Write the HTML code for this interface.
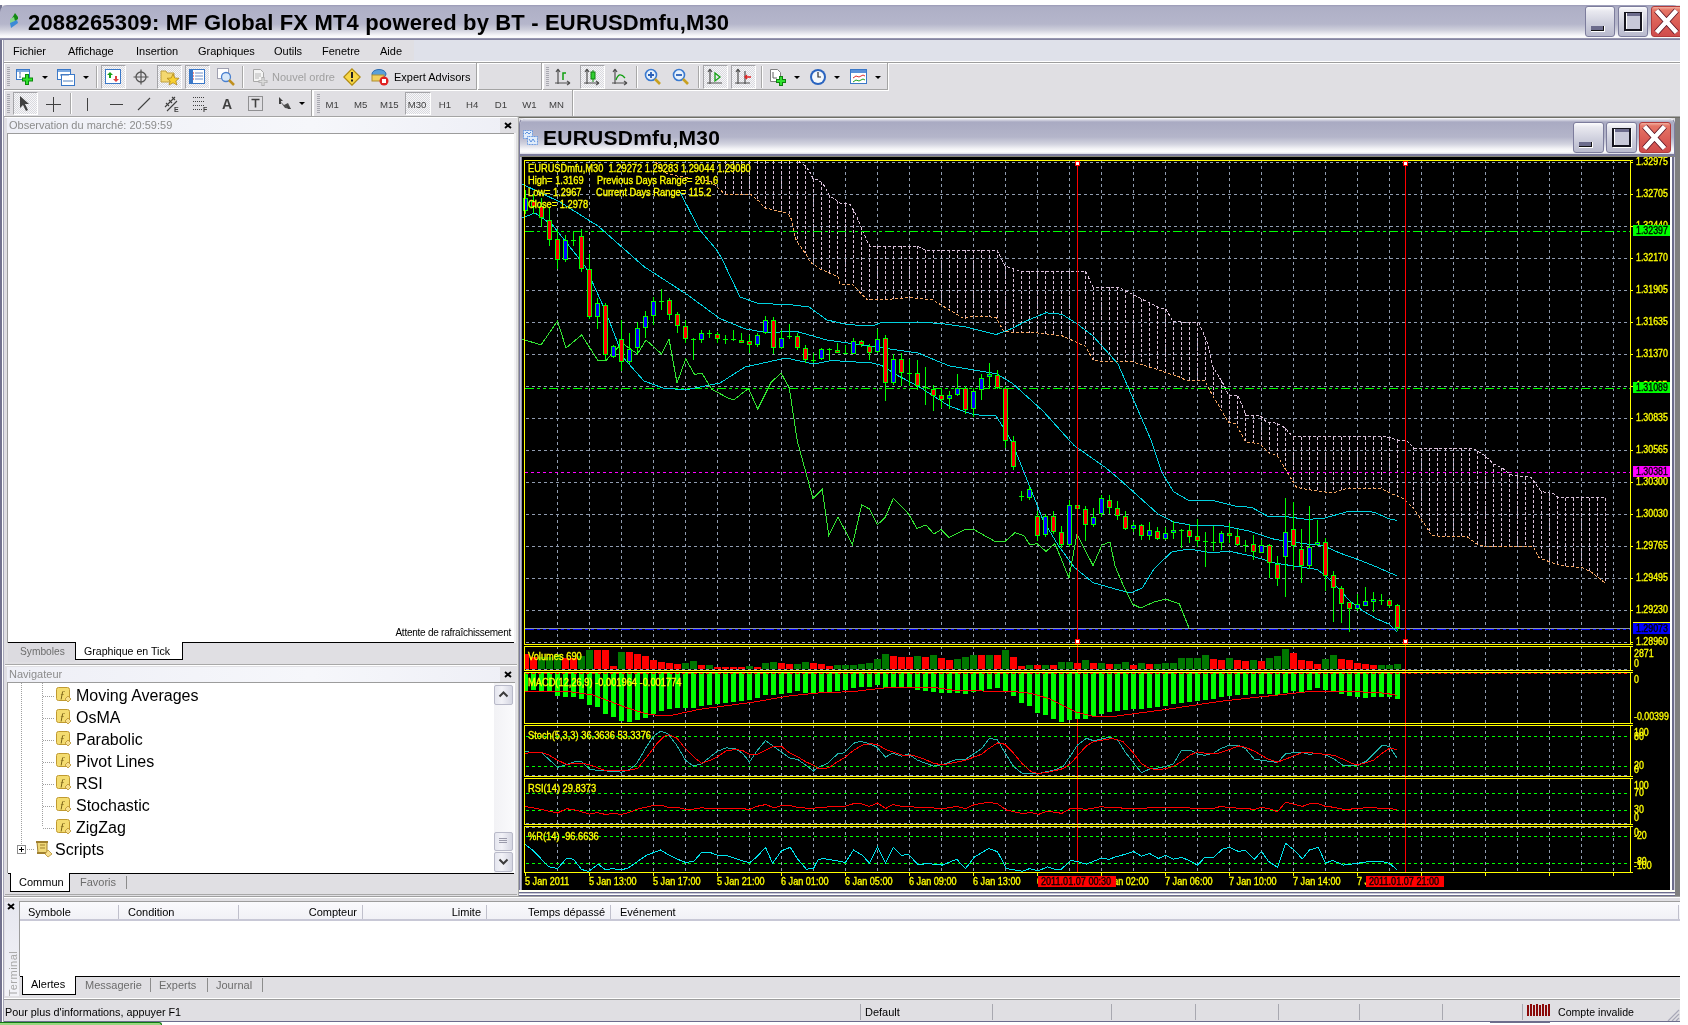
<!DOCTYPE html><html><head><meta charset="utf-8"><style>
*{margin:0;padding:0;box-sizing:border-box}
html,body{width:1688px;height:1025px;overflow:hidden;background:#fff;}
#root{position:absolute;left:0;top:0;width:1688px;height:1025px;will-change:transform;font-family:"Liberation Sans",sans-serif;font-size:11px;color:#000}
.a{position:absolute}
.t{position:absolute;white-space:nowrap;line-height:1}
.g{color:#8c8c8c}
</style></head><body><div id="root"><div class="a" style="left:0px;top:5px;width:1680px;height:1017px;background:#e0dfe3"></div><div class="a" style="left:0px;top:5px;width:2px;height:1017px;background:#73738f"></div><div class="a" style="left:2px;top:39px;width:1px;height:983px;background:#fff"></div><div class="a" style="left:3px;top:39px;width:1px;height:983px;background:#a6a6b8"></div><div class="a" style="left:0px;top:5px;width:1680px;height:34px;border-radius:7px 7px 0 0;background:linear-gradient(#9a9ab6 0px,#aeafc6 2px,#b5b6cb 19px,#cfd0dc 25px,#f3f3f7 30px,#fdfdfd 32px,#eeeef3 34px)"></div><div class="a" style="left:0px;top:38px;width:1680px;height:2px;background:linear-gradient(#a0a0b8,#7a7a98)"></div><svg class="a" style="left:9px;top:12px" width="10" height="17" viewBox="0 0 10 17">
<polygon points="6,1 9,5 9,7 6,9 2,8" fill="#128a12"/><polygon points="1,7 5,5 6,9 1,12" fill="#88d888"/>
<polygon points="1,11 8,8 9,11 2,16" fill="#3b8ad6"/></svg><div class="t" style="left:28px;top:12px;font-size:22px;font-weight:bold;letter-spacing:0.16px">2088265309: MF Global FX MT4 powered by BT - EURUSDmfu,M30</div><div class="a" style="left:1585px;top:6px;width:30px;height:31px;border:1px solid #7c7c9c;border-radius:3px;background:linear-gradient(#fdfdfe 0px,#e9e9f0 4px,#cfd0de 55%,#b9bacd)"></div><div class="a" style="left:1591px;top:26px;width:14px;height:6px;background:#fff"></div><div class="a" style="left:1591px;top:26px;width:13px;height:5px;background:#6c6c8c;border-right:1px solid #111;border-bottom:1px solid #111"></div><div class="a" style="left:1618px;top:6px;width:30px;height:31px;border:1px solid #7c7c9c;border-radius:3px;background:linear-gradient(#fdfdfe 0px,#e9e9f0 4px,#cfd0de 55%,#b9bacd)"></div><div class="a" style="left:1624px;top:12px;width:18px;height:19px;border:2px solid #15151f;border-top:1.5px solid #15151f;box-shadow:1px 1px 0 #fff, inset 1px 0 0 #fff;background:linear-gradient(#6c6c8c 0 3px,#c8c9d9 3px)"></div><div class="a" style="left:1651px;top:6px;width:32px;height:31px;border:1px solid #b23a3a;border-radius:3px;background:linear-gradient(#f2b0a0 0px,#e57566 3px,#dc6058 50%,#cf4c4c)"></div><svg class="a" style="left:1651px;top:6px" width="32" height="31"><path d="M5.5 4.5L25.5 26.5M25.5 4.5L5.5 26.5" stroke="#5a1020" stroke-width="6.2"/><path d="M5.5 4.5L25.5 26.5M25.5 4.5L5.5 26.5" stroke="#fff" stroke-width="4.6"/></svg><div class="a" style="left:1680px;top:0px;width:8px;height:1025px;background:#fff"></div><div class="a" style="left:4px;top:40px;width:1676px;height:21px;background:#dfe1ea"></div><div class="a" style="left:4px;top:40px;width:410px;height:21px;background:#e0dfe3"></div><div class="a" style="left:4px;top:61px;width:1676px;height:1px;background:#fff"></div><div class="a" style="left:4px;top:62px;width:1676px;height:1px;background:#9d9d9d"></div><div class="a" style="left:4px;top:63px;width:1676px;height:1px;background:#fff"></div><div class="t" style="left:13px;top:46px;font-size:11px">Fichier</div><div class="t" style="left:68px;top:46px;font-size:11px">Affichage</div><div class="t" style="left:136px;top:46px;font-size:11px">Insertion</div><div class="t" style="left:198px;top:46px;font-size:11px">Graphiques</div><div class="t" style="left:274px;top:46px;font-size:11px">Outils</div><div class="t" style="left:322px;top:46px;font-size:11px">Fenetre</div><div class="t" style="left:380px;top:46px;font-size:11px">Aide</div><div class="a" style="left:4px;top:64px;width:1676px;height:53px;background:#e0dfe3"></div><div class="a" style="left:4px;top:63px;width:472px;height:1px;background:#fff"></div><div class="a" style="left:4px;top:63px;width:1px;height:26px;background:#fff"></div><div class="a" style="left:476px;top:63px;width:1px;height:27px;background:#a4a4a4"></div><div class="a" style="left:4px;top:89px;width:473px;height:1px;background:#a4a4a4"></div><div class="a" style="left:477px;top:63px;width:1px;height:28px;background:#fff"></div><div class="a" style="left:4px;top:90px;width:474px;height:1px;background:#fff"></div><div class="a" style="left:478px;top:63px;width:63px;height:1px;background:#fff"></div><div class="a" style="left:478px;top:63px;width:1px;height:26px;background:#fff"></div><div class="a" style="left:541px;top:63px;width:1px;height:27px;background:#a4a4a4"></div><div class="a" style="left:478px;top:89px;width:64px;height:1px;background:#a4a4a4"></div><div class="a" style="left:542px;top:63px;width:1px;height:28px;background:#fff"></div><div class="a" style="left:478px;top:90px;width:65px;height:1px;background:#fff"></div><div class="a" style="left:543px;top:63px;width:344px;height:1px;background:#fff"></div><div class="a" style="left:543px;top:63px;width:1px;height:26px;background:#fff"></div><div class="a" style="left:887px;top:63px;width:1px;height:27px;background:#a4a4a4"></div><div class="a" style="left:543px;top:89px;width:345px;height:1px;background:#a4a4a4"></div><div class="a" style="left:888px;top:63px;width:1px;height:28px;background:#fff"></div><div class="a" style="left:543px;top:90px;width:346px;height:1px;background:#fff"></div><div class="a" style="left:4px;top:90px;width:307px;height:1px;background:#fff"></div><div class="a" style="left:4px;top:90px;width:1px;height:26px;background:#fff"></div><div class="a" style="left:311px;top:90px;width:1px;height:27px;background:#a4a4a4"></div><div class="a" style="left:4px;top:116px;width:308px;height:1px;background:#a4a4a4"></div><div class="a" style="left:312px;top:90px;width:1px;height:28px;background:#fff"></div><div class="a" style="left:4px;top:117px;width:309px;height:1px;background:#fff"></div><div class="a" style="left:313px;top:90px;width:259px;height:1px;background:#fff"></div><div class="a" style="left:313px;top:90px;width:1px;height:26px;background:#fff"></div><div class="a" style="left:572px;top:90px;width:1px;height:27px;background:#a4a4a4"></div><div class="a" style="left:313px;top:116px;width:260px;height:1px;background:#a4a4a4"></div><div class="a" style="left:573px;top:90px;width:1px;height:28px;background:#fff"></div><div class="a" style="left:313px;top:117px;width:261px;height:1px;background:#fff"></div><div class="a" style="left:4px;top:116px;width:1676px;height:1px;background:#a4a4a4"></div><div class="a" style="left:7px;top:67px;width:3px;height:1px;background:#a8a8b0"></div><div class="a" style="left:7px;top:69px;width:3px;height:1px;background:#a8a8b0"></div><div class="a" style="left:7px;top:71px;width:3px;height:1px;background:#a8a8b0"></div><div class="a" style="left:7px;top:73px;width:3px;height:1px;background:#a8a8b0"></div><div class="a" style="left:7px;top:75px;width:3px;height:1px;background:#a8a8b0"></div><div class="a" style="left:7px;top:77px;width:3px;height:1px;background:#a8a8b0"></div><div class="a" style="left:7px;top:79px;width:3px;height:1px;background:#a8a8b0"></div><div class="a" style="left:7px;top:81px;width:3px;height:1px;background:#a8a8b0"></div><div class="a" style="left:7px;top:83px;width:3px;height:1px;background:#a8a8b0"></div><div class="a" style="left:7px;top:85px;width:3px;height:1px;background:#a8a8b0"></div><div class="a" style="left:546px;top:67px;width:3px;height:1px;background:#a8a8b0"></div><div class="a" style="left:546px;top:69px;width:3px;height:1px;background:#a8a8b0"></div><div class="a" style="left:546px;top:71px;width:3px;height:1px;background:#a8a8b0"></div><div class="a" style="left:546px;top:73px;width:3px;height:1px;background:#a8a8b0"></div><div class="a" style="left:546px;top:75px;width:3px;height:1px;background:#a8a8b0"></div><div class="a" style="left:546px;top:77px;width:3px;height:1px;background:#a8a8b0"></div><div class="a" style="left:546px;top:79px;width:3px;height:1px;background:#a8a8b0"></div><div class="a" style="left:546px;top:81px;width:3px;height:1px;background:#a8a8b0"></div><div class="a" style="left:546px;top:83px;width:3px;height:1px;background:#a8a8b0"></div><div class="a" style="left:546px;top:85px;width:3px;height:1px;background:#a8a8b0"></div><div class="a" style="left:7px;top:94px;width:3px;height:1px;background:#a8a8b0"></div><div class="a" style="left:7px;top:96px;width:3px;height:1px;background:#a8a8b0"></div><div class="a" style="left:7px;top:98px;width:3px;height:1px;background:#a8a8b0"></div><div class="a" style="left:7px;top:100px;width:3px;height:1px;background:#a8a8b0"></div><div class="a" style="left:7px;top:102px;width:3px;height:1px;background:#a8a8b0"></div><div class="a" style="left:7px;top:104px;width:3px;height:1px;background:#a8a8b0"></div><div class="a" style="left:7px;top:106px;width:3px;height:1px;background:#a8a8b0"></div><div class="a" style="left:7px;top:108px;width:3px;height:1px;background:#a8a8b0"></div><div class="a" style="left:7px;top:110px;width:3px;height:1px;background:#a8a8b0"></div><div class="a" style="left:7px;top:112px;width:3px;height:1px;background:#a8a8b0"></div><div class="a" style="left:317px;top:94px;width:3px;height:1px;background:#a8a8b0"></div><div class="a" style="left:317px;top:96px;width:3px;height:1px;background:#a8a8b0"></div><div class="a" style="left:317px;top:98px;width:3px;height:1px;background:#a8a8b0"></div><div class="a" style="left:317px;top:100px;width:3px;height:1px;background:#a8a8b0"></div><div class="a" style="left:317px;top:102px;width:3px;height:1px;background:#a8a8b0"></div><div class="a" style="left:317px;top:104px;width:3px;height:1px;background:#a8a8b0"></div><div class="a" style="left:317px;top:106px;width:3px;height:1px;background:#a8a8b0"></div><div class="a" style="left:317px;top:108px;width:3px;height:1px;background:#a8a8b0"></div><div class="a" style="left:317px;top:110px;width:3px;height:1px;background:#a8a8b0"></div><div class="a" style="left:317px;top:112px;width:3px;height:1px;background:#a8a8b0"></div><svg class="a" style="left:16px;top:69px" width="18" height="17"><rect x="0.5" y="0.5" width="13" height="10" fill="#fff" stroke="#3a78c8"/><rect x="1" y="1" width="12" height="2" fill="#7aa8e0"/><path d="M4 3v6M3 4h2M3 8h2" stroke="#7090c0"/><path d="M11 5v11M6 10.5h11" stroke="#0a8a0a" stroke-width="4"/><path d="M11 6v9M7 10.5h9" stroke="#30e030" stroke-width="2"/></svg><svg class="a" style="left:42px;top:76px" width="6" height="4"><polygon points="0,0 6,0 3,3" fill="#000"/></svg><svg class="a" style="left:57px;top:69px" width="18" height="17"><rect x="0.5" y="0.5" width="13" height="10" fill="#fff" stroke="#3a78c8"/><rect x="1" y="1" width="12" height="2" fill="#7aa8e0"/><rect x="4.5" y="5.5" width="13" height="11" fill="#fff" stroke="#3a78c8"/><path d="M6 12h10M3 6h9" stroke="#5080c0"/></svg><svg class="a" style="left:83px;top:76px" width="6" height="4"><polygon points="0,0 6,0 3,3" fill="#000"/></svg><div class="a" style="left:96px;top:66px;width:1px;height:22px;background:#a8a8a8"></div><div class="a" style="left:97px;top:66px;width:1px;height:22px;background:#fff"></div><div class="a" style="left:101px;top:65px;width:25px;height:24px;border-top:1.5px solid #a4a4a8;border-left:1.5px solid #a4a4a8;border-right:1px solid #fff;border-bottom:1px solid #fff;background:repeating-conic-gradient(#d9d9de 0 25%,#f7f7f9 0 50%) 0 0/2px 2px"></div><svg class="a" style="left:105px;top:69px" width="17" height="16"><rect x="0.5" y="0.5" width="15" height="14" fill="#fff" stroke="#3a78c8"/><path d="M5 3l3 3h-2v3h-2v-3h-2z" fill="#18a018"/><path d="M11 13l3-3h-2v-3h-2v3h-2z" fill="#e04040"/></svg><svg class="a" style="left:133px;top:69px" width="16" height="16"><circle cx="8" cy="8" r="5" fill="none" stroke="#555" stroke-width="1.3"/><path d="M8 0.5v15M0.5 8h15" stroke="#555" stroke-width="1.2"/></svg><div class="a" style="left:157px;top:65px;width:25px;height:24px;border-top:1.5px solid #a4a4a8;border-left:1.5px solid #a4a4a8;border-right:1px solid #fff;border-bottom:1px solid #fff;background:repeating-conic-gradient(#d9d9de 0 25%,#f7f7f9 0 50%) 0 0/2px 2px"></div><svg class="a" style="left:160px;top:68px" width="19" height="18"><path d="M1 3h5l1 2h7v9h-13z" fill="#f4d870" stroke="#c0a040"/><polygon points="13,6 14.8,10 19,10.3 15.8,13 17,17 13,14.8 9,17 10.2,13 7,10.3 11.2,10" fill="#f8d030" stroke="#b08820" stroke-width="0.8"/></svg><div class="a" style="left:185px;top:65px;width:25px;height:24px;border-top:1.5px solid #a4a4a8;border-left:1.5px solid #a4a4a8;border-right:1px solid #fff;border-bottom:1px solid #fff;background:repeating-conic-gradient(#d9d9de 0 25%,#f7f7f9 0 50%) 0 0/2px 2px"></div><svg class="a" style="left:189px;top:69px" width="17" height="16"><rect x="0.5" y="0.5" width="15" height="14" fill="#fff" stroke="#3a78c8"/><rect x="1" y="1" width="3" height="13" fill="#3a78c8"/><path d="M6 4h8M6 7h8M6 10h8" stroke="#7090c8"/><path d="M4 4h1M4 7h1M4 10h1" stroke="#e02020"/></svg><svg class="a" style="left:217px;top:68px" width="18" height="18"><rect x="0.5" y="0.5" width="11" height="10" fill="#fff" stroke="#a0a0b0"/><circle cx="9" cy="9" r="4.5" fill="#d8e8f8" stroke="#4a80d0" stroke-width="1.3"/><path d="M12 12l5 5" stroke="#c09020" stroke-width="2.5"/></svg><div class="a" style="left:242px;top:66px;width:1px;height:22px;background:#a8a8a8"></div><div class="a" style="left:243px;top:66px;width:1px;height:22px;background:#fff"></div><svg class="a" style="left:252px;top:68px" width="17" height="19"><path d="M1.5 1.5h7l3 3v9h-10z" fill="#f4f4f4" stroke="#a8a8a8"/><path d="M3 6h6M3 8h6M3 10h4" stroke="#b8b8b8"/><path d="M11 9v9M6.5 13.5h9" stroke="#b0b0b0" stroke-width="3.2"/><path d="M11 10v7M7.5 13.5h7" stroke="#dcdcdc" stroke-width="1.4"/></svg><div class="t" style="left:272px;top:72px;font-size:11px;color:#a0a0a0">Nouvel ordre</div><svg class="a" style="left:343px;top:68px" width="18" height="18"><polygon points="9,0.8 17.2,9 9,17.2 0.8,9" fill="#f8d848" stroke="#b08a10" stroke-width="1.2"/><rect x="8" y="4" width="2" height="6" fill="#222"/><rect x="8" y="11.5" width="2" height="2" fill="#222"/></svg><svg class="a" style="left:370px;top:67px" width="20" height="20"><ellipse cx="9" cy="7" rx="7" ry="4.5" fill="#5aa0d8" stroke="#2a6ab0"/><rect x="2" y="8" width="12" height="6" fill="#f0d060" stroke="#b09030"/><circle cx="14" cy="14" r="4.5" fill="#e02020"/><rect x="12" y="12" width="4" height="4" fill="#fff"/></svg><div class="t" style="left:394px;top:72px;font-size:11px">Expert Advisors</div><svg class="a" style="left:555px;top:68px" width="16" height="18"><path d="M3 1v15M0 15h15M3 1l-2 3M3 1l2 3M15 15l-3-2M15 15l-3 2" stroke="#505050" stroke-width="1.2" fill="none"/><path d="M8 12V5h3" stroke="#10a010" stroke-width="1.5" fill="none"/></svg><div class="a" style="left:580px;top:65px;width:25px;height:24px;border-top:1.5px solid #a4a4a8;border-left:1.5px solid #a4a4a8;border-right:1px solid #fff;border-bottom:1px solid #fff;background:repeating-conic-gradient(#d9d9de 0 25%,#f7f7f9 0 50%) 0 0/2px 2px"></div><svg class="a" style="left:584px;top:68px" width="16" height="18"><path d="M3 1v15M0 15h15M3 1l-2 3M3 1l2 3M15 15l-3-2M15 15l-3 2" stroke="#505050" stroke-width="1.2" fill="none"/><path d="M9 2v12" stroke="#109010"/><rect x="7" y="4" width="4" height="7" fill="#30d030" stroke="#108010"/></svg><svg class="a" style="left:612px;top:68px" width="16" height="18"><path d="M3 1v15M0 15h15M3 1l-2 3M3 1l2 3M15 15l-3-2M15 15l-3 2" stroke="#505050" stroke-width="1.2" fill="none"/><path d="M4 12C6 6 9 5 13 10" stroke="#10a010" stroke-width="1.3" fill="none"/></svg><div class="a" style="left:636px;top:66px;width:1px;height:22px;background:#a8a8a8"></div><div class="a" style="left:637px;top:66px;width:1px;height:22px;background:#fff"></div><svg class="a" style="left:644px;top:68px" width="18" height="18"><circle cx="7" cy="7" r="5.5" fill="#e8f2fc" stroke="#3a7ad0" stroke-width="1.6"/><path d="M4 7h6M7 4v6" stroke="#2a60b8" stroke-width="1.8"/><path d="M11 11l5 5" stroke="#c8a020" stroke-width="2.6"/></svg><svg class="a" style="left:672px;top:68px" width="18" height="18"><circle cx="7" cy="7" r="5.5" fill="#e8f2fc" stroke="#3a7ad0" stroke-width="1.6"/><path d="M4 7h6" stroke="#2a60b8" stroke-width="1.8"/><path d="M11 11l5 5" stroke="#c8a020" stroke-width="2.6"/></svg><div class="a" style="left:698px;top:66px;width:1px;height:22px;background:#a8a8a8"></div><div class="a" style="left:699px;top:66px;width:1px;height:22px;background:#fff"></div><div class="a" style="left:703px;top:65px;width:25px;height:24px;border-top:1.5px solid #a4a4a8;border-left:1.5px solid #a4a4a8;border-right:1px solid #fff;border-bottom:1px solid #fff;background:repeating-conic-gradient(#d9d9de 0 25%,#f7f7f9 0 50%) 0 0/2px 2px"></div><svg class="a" style="left:707px;top:68px" width="16" height="18"><path d="M3 1v15M0 15h15M3 1l-2 3M3 1l2 3" stroke="#505050" stroke-width="1.2" fill="none"/><polygon points="8,5 13,9 8,13" fill="none" stroke="#10a010" stroke-width="1.3"/></svg><div class="a" style="left:731px;top:65px;width:25px;height:24px;border-top:1.5px solid #a4a4a8;border-left:1.5px solid #a4a4a8;border-right:1px solid #fff;border-bottom:1px solid #fff;background:repeating-conic-gradient(#d9d9de 0 25%,#f7f7f9 0 50%) 0 0/2px 2px"></div><svg class="a" style="left:735px;top:68px" width="16" height="18"><path d="M3 1v15M0 15h15M3 1l-2 3M3 1l2 3M10 3v13" stroke="#505050" stroke-width="1.2" fill="none"/><path d="M16 9h-5M12 7l-2 2 2 2" stroke="#e02020" stroke-width="1.3" fill="none"/></svg><div class="a" style="left:761px;top:66px;width:1px;height:22px;background:#a8a8a8"></div><div class="a" style="left:762px;top:66px;width:1px;height:22px;background:#fff"></div><svg class="a" style="left:769px;top:67px" width="18" height="20"><path d="M1.5 2.5h7l3 3v9h-10z" fill="#fff" stroke="#808080"/><path d="M4 5v6h4" stroke="#606060" fill="none"/><path d="M12 9v10M7 14h10" stroke="#108010" stroke-width="4"/><path d="M12 10v8M8 14h8" stroke="#30e030" stroke-width="2"/></svg><svg class="a" style="left:794px;top:76px" width="6" height="4"><polygon points="0,0 6,0 3,3" fill="#000"/></svg><svg class="a" style="left:809px;top:68px" width="18" height="18"><circle cx="9" cy="9" r="8" fill="#2a64c0"/><circle cx="9" cy="9" r="6" fill="#f4f8fc"/><path d="M9 4v5h3" stroke="#303030" stroke-width="1.2" fill="none"/></svg><svg class="a" style="left:834px;top:76px" width="6" height="4"><polygon points="0,0 6,0 3,3" fill="#000"/></svg><svg class="a" style="left:850px;top:69px" width="18" height="16"><rect x="0.5" y="0.5" width="16" height="14" fill="#fff" stroke="#3a78c8"/><rect x="1" y="1" width="15" height="3" fill="#5a90d8"/><path d="M3 9l3-2 3 1 4-2 2 1" stroke="#e03030" fill="none"/><path d="M3 13l3-2 3 1 4-2 2 1" stroke="#20a020" fill="none"/></svg><svg class="a" style="left:875px;top:76px" width="6" height="4"><polygon points="0,0 6,0 3,3" fill="#000"/></svg><div class="a" style="left:13px;top:92px;width:25px;height:23px;border-top:1.5px solid #a4a4a8;border-left:1.5px solid #a4a4a8;border-right:1px solid #fff;border-bottom:1px solid #fff;background:repeating-conic-gradient(#d9d9de 0 25%,#f7f7f9 0 50%) 0 0/2px 2px"></div><svg class="a" style="left:19px;top:95px" width="12" height="17"><polygon points="1,1 1,13 4,10 7,16 9,15 6,9 10,9" fill="#404040"/></svg><svg class="a" style="left:46px;top:97px" width="15" height="15"><path d="M7.5 0v15M0 7.5h15" stroke="#404040"/></svg><div class="a" style="left:70px;top:93px;width:1px;height:21px;background:#a8a8a8"></div><div class="a" style="left:71px;top:93px;width:1px;height:21px;background:#fff"></div><div class="a" style="left:87px;top:98px;width:1px;height:13px;background:#404040"></div><div class="a" style="left:110px;top:104px;width:13px;height:1px;background:#404040"></div><svg class="a" style="left:137px;top:97px" width="14" height="14"><path d="M1 13L13 1" stroke="#404040" stroke-width="1.1"/></svg><svg class="a" style="left:163px;top:95px" width="17" height="18"><path d="M2 12L12 2M4 16L14 6M3 8l3 3M6 5l3 3M9 2l3 3" stroke="#404040" stroke-width="1.1"/><text x="11" y="17" font-size="7" font-family="Liberation Sans" font-weight="bold" fill="#404040">E</text></svg><svg class="a" style="left:192px;top:96px" width="17" height="17"><path d="M1 1.5h12M1 5.5h12M1 9.5h12M1 13.5h10" stroke="#404040" stroke-dasharray="1 1"/><text x="11" y="16" font-size="7" font-family="Liberation Sans" font-weight="bold" fill="#404040">F</text></svg><div class="t" style="left:222px;top:97px;font-size:14px;font-weight:bold;color:#404040">A</div><svg class="a" style="left:248px;top:96px" width="15" height="15"><rect x="0.5" y="0.5" width="14" height="14" fill="none" stroke="#404040" stroke-dasharray="1 1"/><path d="M3.5 3.5h8M7.5 3.5v8" stroke="#404040" stroke-width="1.6"/></svg><svg class="a" style="left:277px;top:96px" width="16" height="16"><polygon points="2,1 6,5 4,5 4,8 2,8" fill="#404040"/><polygon points="2,4 7,9 11,7 14,13 8,12" fill="#505050"/><polygon points="9,8 14,13 11,13" fill="#404040"/></svg><svg class="a" style="left:299px;top:102px" width="6" height="4"><polygon points="0,0 6,0 3,3" fill="#000"/></svg><div class="t" style="left:325.5px;top:100px;font-size:9.6px;color:#404040">M1</div><div class="t" style="left:354px;top:100px;font-size:9.6px;color:#404040">M5</div><div class="t" style="left:380px;top:100px;font-size:9.6px;color:#404040">M15</div><div class="a" style="left:405px;top:92px;width:26px;height:23px;border-top:1.5px solid #a4a4a8;border-left:1.5px solid #a4a4a8;border-right:1px solid #fff;border-bottom:1px solid #fff;background:repeating-conic-gradient(#d9d9de 0 25%,#f7f7f9 0 50%) 0 0/2px 2px"></div><div class="t" style="left:407.8px;top:100px;font-size:9.6px;color:#404040">M30</div><div class="t" style="left:438.8px;top:100px;font-size:9.6px;color:#404040">H1</div><div class="t" style="left:466px;top:100px;font-size:9.6px;color:#404040">H4</div><div class="t" style="left:494.8px;top:100px;font-size:9.6px;color:#404040">D1</div><div class="t" style="left:522.2px;top:100px;font-size:9.6px;color:#404040">W1</div><div class="t" style="left:549px;top:100px;font-size:9.6px;color:#404040">MN</div><div class="a" style="left:4px;top:117px;width:1676px;height:781px;background:#e0dfe3"></div><div class="a" style="left:518px;top:117px;width:1162px;height:781px;background:#e0dfe3"></div><div class="a" style="left:1675px;top:117px;width:5px;height:779px;background:#808080"></div><div class="a" style="left:518px;top:117px;width:1162px;height:1px;background:#6e6e66"></div><div class="a" style="left:518px;top:117px;width:1px;height:779px;background:#6e6e66"></div><div class="a" style="left:5px;top:117px;width:512px;height:534px;background:#e0dfe3"></div><div class="a" style="left:5px;top:117px;width:512px;height:1px;background:#fff"></div><div class="a" style="left:7px;top:118px;width:507px;height:15px;background:linear-gradient(90deg,#eeeff6,#f6f7fb 60%,#eeeff6)"></div><div class="a" style="left:500px;top:118px;width:14px;height:15px;background:#e0dfe3"></div><div class="t" style="left:9px;top:120px;font-size:11px;color:#8c8c8c">Observation du march&#233;: 20:59:59</div><svg class="a" style="left:504px;top:122px" width="8" height="7"><path d="M1 1L7 6M7 1L1 6" stroke="#000" stroke-width="1.9"/></svg><div class="a" style="left:7px;top:133px;width:508px;height:510px;background:#fff;border-left:1px solid #9c9c9c;border-top:1px solid #9c9c9c"></div><div class="a" style="left:514px;top:133px;width:2px;height:510px;background:#f4f4f4"></div><div class="t" style="right:1177px;top:628px;font-size:10px;letter-spacing:-0.25px">Attente de rafra&#238;chissement</div><div class="a" style="left:8px;top:642px;width:506px;height:1px;background:#000"></div><div class="a" style="left:8px;top:643px;width:67px;height:19px;background:#dcdbe0"></div><div class="a" style="left:75px;top:642px;width:108px;height:18px;background:#fff;border:1.5px solid #000;border-top:none"></div><div class="t" style="left:20px;top:647px;font-size:10.2px;color:#6c6c6c">Symboles</div><div class="t" style="left:84px;top:646px;font-size:10.6px">Graphique en Tick</div><div class="a" style="left:5px;top:664px;width:512px;height:1px;background:#a8a8a8"></div><div class="a" style="left:5px;top:665px;width:512px;height:1px;background:#fff"></div><div class="a" style="left:7px;top:667px;width:507px;height:15px;background:linear-gradient(90deg,#eeeff6,#f6f7fb 60%,#eeeff6)"></div><div class="a" style="left:500px;top:667px;width:14px;height:15px;background:#e0dfe3"></div><div class="t" style="left:9px;top:669px;font-size:11px;color:#8c8c8c">Navigateur</div><svg class="a" style="left:504px;top:671px" width="8" height="7"><path d="M1 1L7 6M7 1L1 6" stroke="#000" stroke-width="1.9"/></svg><div class="a" style="left:7px;top:682px;width:508px;height:191px;background:#fff;border-left:1px solid #9c9c9c;border-top:1px solid #9c9c9c"></div><div class="a" style="left:21px;top:683px;width:1px;height:170px;background-image:repeating-linear-gradient(#a0a0a0 0 1px,transparent 1px 2px)"></div><div class="a" style="left:42px;top:683px;width:1px;height:144px;background-image:repeating-linear-gradient(#a0a0a0 0 1px,transparent 1px 2px)"></div><div class="a" style="left:43px;top:696px;width:11px;height:1px;background-image:repeating-linear-gradient(90deg,#a0a0a0 0 1px,transparent 1px 2px)"></div><svg class="a" style="left:56px;top:687px" width="16" height="16"><rect x="0.5" y="0.5" width="13" height="13" rx="2" fill="#f4dc70" stroke="#c09a30"/><text x="3.5" y="11" font-size="11" font-style="italic" font-family="Liberation Serif" fill="#705810">&#402;</text><polygon points="12,9 15,12 12,15 9,12" fill="#f8e090" stroke="#b89030" stroke-width="0.8"/></svg><div class="t" style="left:76px;top:688px;font-size:16px">Moving Averages</div><div class="a" style="left:43px;top:718px;width:11px;height:1px;background-image:repeating-linear-gradient(90deg,#a0a0a0 0 1px,transparent 1px 2px)"></div><svg class="a" style="left:56px;top:709px" width="16" height="16"><rect x="0.5" y="0.5" width="13" height="13" rx="2" fill="#f4dc70" stroke="#c09a30"/><text x="3.5" y="11" font-size="11" font-style="italic" font-family="Liberation Serif" fill="#705810">&#402;</text><polygon points="12,9 15,12 12,15 9,12" fill="#f8e090" stroke="#b89030" stroke-width="0.8"/></svg><div class="t" style="left:76px;top:710px;font-size:16px">OsMA</div><div class="a" style="left:43px;top:740px;width:11px;height:1px;background-image:repeating-linear-gradient(90deg,#a0a0a0 0 1px,transparent 1px 2px)"></div><svg class="a" style="left:56px;top:731px" width="16" height="16"><rect x="0.5" y="0.5" width="13" height="13" rx="2" fill="#f4dc70" stroke="#c09a30"/><text x="3.5" y="11" font-size="11" font-style="italic" font-family="Liberation Serif" fill="#705810">&#402;</text><polygon points="12,9 15,12 12,15 9,12" fill="#f8e090" stroke="#b89030" stroke-width="0.8"/></svg><div class="t" style="left:76px;top:732px;font-size:16px">Parabolic</div><div class="a" style="left:43px;top:762px;width:11px;height:1px;background-image:repeating-linear-gradient(90deg,#a0a0a0 0 1px,transparent 1px 2px)"></div><svg class="a" style="left:56px;top:753px" width="16" height="16"><rect x="0.5" y="0.5" width="13" height="13" rx="2" fill="#f4dc70" stroke="#c09a30"/><text x="3.5" y="11" font-size="11" font-style="italic" font-family="Liberation Serif" fill="#705810">&#402;</text><polygon points="12,9 15,12 12,15 9,12" fill="#f8e090" stroke="#b89030" stroke-width="0.8"/></svg><div class="t" style="left:76px;top:754px;font-size:16px">Pivot Lines</div><div class="a" style="left:43px;top:784px;width:11px;height:1px;background-image:repeating-linear-gradient(90deg,#a0a0a0 0 1px,transparent 1px 2px)"></div><svg class="a" style="left:56px;top:775px" width="16" height="16"><rect x="0.5" y="0.5" width="13" height="13" rx="2" fill="#f4dc70" stroke="#c09a30"/><text x="3.5" y="11" font-size="11" font-style="italic" font-family="Liberation Serif" fill="#705810">&#402;</text><polygon points="12,9 15,12 12,15 9,12" fill="#f8e090" stroke="#b89030" stroke-width="0.8"/></svg><div class="t" style="left:76px;top:776px;font-size:16px">RSI</div><div class="a" style="left:43px;top:806px;width:11px;height:1px;background-image:repeating-linear-gradient(90deg,#a0a0a0 0 1px,transparent 1px 2px)"></div><svg class="a" style="left:56px;top:797px" width="16" height="16"><rect x="0.5" y="0.5" width="13" height="13" rx="2" fill="#f4dc70" stroke="#c09a30"/><text x="3.5" y="11" font-size="11" font-style="italic" font-family="Liberation Serif" fill="#705810">&#402;</text><polygon points="12,9 15,12 12,15 9,12" fill="#f8e090" stroke="#b89030" stroke-width="0.8"/></svg><div class="t" style="left:76px;top:798px;font-size:16px">Stochastic</div><div class="a" style="left:43px;top:828px;width:11px;height:1px;background-image:repeating-linear-gradient(90deg,#a0a0a0 0 1px,transparent 1px 2px)"></div><svg class="a" style="left:56px;top:819px" width="16" height="16"><rect x="0.5" y="0.5" width="13" height="13" rx="2" fill="#f4dc70" stroke="#c09a30"/><text x="3.5" y="11" font-size="11" font-style="italic" font-family="Liberation Serif" fill="#705810">&#402;</text><polygon points="12,9 15,12 12,15 9,12" fill="#f8e090" stroke="#b89030" stroke-width="0.8"/></svg><div class="t" style="left:76px;top:820px;font-size:16px">ZigZag</div><div class="a" style="left:17px;top:845px;width:9px;height:9px;background:#fff;border:1px solid #8c8c8c"></div><div class="a" style="left:19px;top:849px;width:5px;height:1px;background:#000"></div><div class="a" style="left:21px;top:847px;width:1px;height:5px;background:#000"></div><div class="a" style="left:27px;top:849px;width:8px;height:1px;background-image:repeating-linear-gradient(90deg,#a0a0a0 0 1px,transparent 1px 2px)"></div><svg class="a" style="left:35px;top:840px" width="18" height="18"><path d="M2 2h10v11h-9z" fill="#f0d878" stroke="#a08030"/><path d="M1 2h12M2 13h11" stroke="#a08030" stroke-width="2"/><path d="M5 5h5M5 8h5" stroke="#a08030"/><polygon points="13,10 17,14 13,17 10,14" fill="#f8e090" stroke="#b89030" stroke-width="0.8"/></svg><div class="t" style="left:55px;top:842px;font-size:16px">Scripts</div><div class="a" style="left:494px;top:683px;width:20px;height:190px;background:linear-gradient(90deg,#f2f2f5,#fafafc)"></div><div class="a" style="left:494px;top:685px;width:19px;height:20px;border:1px solid #b8b9c8;border-radius:2px;background:linear-gradient(90deg,#e4e5ee,#f2f2f7 40%,#d5d6e2)"></div><svg class="a" style="left:498px;top:690px" width="11" height="8"><path d="M1.5 6.5l4-4 4 4" stroke="#3c3c3c" stroke-width="2" fill="none"/></svg><div class="a" style="left:494px;top:832px;width:19px;height:19px;border:1px solid #b8b9c8;border-radius:2px;background:linear-gradient(90deg,#e4e5ee,#f2f2f7 40%,#d5d6e2)"></div><div class="a" style="left:499px;top:838px;width:8px;height:1px;background:#9a9aaa"></div><div class="a" style="left:499px;top:840px;width:8px;height:1px;background:#9a9aaa"></div><div class="a" style="left:499px;top:842px;width:8px;height:1px;background:#9a9aaa"></div><div class="a" style="left:494px;top:852px;width:19px;height:20px;border:1px solid #b8b9c8;border-radius:2px;background:linear-gradient(90deg,#e4e5ee,#f2f2f7 40%,#d5d6e2)"></div><svg class="a" style="left:498px;top:858px" width="11" height="8"><path d="M1.5 1.5l4 4 4-4" stroke="#3c3c3c" stroke-width="2" fill="none"/></svg><div class="a" style="left:8px;top:873px;width:506px;height:1px;background:#000"></div><div class="a" style="left:10px;top:873px;width:60px;height:19px;background:#fff;border:1.5px solid #000;border-top:none"></div><div class="t" style="left:19px;top:877px;font-size:11px">Commun</div><div class="t" style="left:80px;top:877px;font-size:11px;color:#6c6c6c">Favoris</div><div class="a" style="left:126px;top:876px;width:1px;height:13px;background:#8c8c8c"></div><div class="a" style="left:5px;top:894px;width:512px;height:1px;background:#a8a8a8"></div><div class="a" style="left:517px;top:117px;width:2px;height:779px;background:linear-gradient(90deg,#fff,#8a8a8a)"></div><div class="a" style="left:519px;top:118px;width:1156px;height:778px;background:#c9cad8;border:1px solid #7d7d9c;border-top-color:#f4f4f8;border-radius:6px 6px 0 0"></div><div class="a" style="left:520px;top:119px;width:1154px;height:35px;border-radius:6px 6px 0 0;background:linear-gradient(#e8e8f0 0px,#a9aac2 3px,#b4b5ca 18px,#d2d3df 25px,#f5f5f8 30px,#fdfdfd 33px,#d8d8e2 35px)"></div><div class="a" style="left:520px;top:154px;width:1154px;height:2px;background:#7c7c9c"></div><div class="a" style="left:520px;top:156px;width:1154px;height:1px;background:#8a8878"></div><div class="a" style="left:519px;top:157px;width:1px;height:735px;background:#7d7d9c"></div><div class="a" style="left:520px;top:157px;width:1px;height:735px;background:#c4c4d4"></div><div class="a" style="left:521px;top:157px;width:1px;height:735px;background:#9090a8"></div><div class="a" style="left:1670px;top:157px;width:5px;height:735px;background:linear-gradient(90deg,#fff 0 2px,#6c6c8c 2px 3.5px,#d0d0dc 3.5px 5px)"></div><div class="a" style="left:519px;top:890px;width:1156px;height:6px;background:linear-gradient(#fffff4 0 2px,#6c6c8c 2px 3px,#c8c8d8 3px 4px,#fff 4px 5px,#6c6c8c 5px 6px)"></div><svg class="a" style="left:523px;top:130px" width="15" height="15"><rect x="0.5" y="0.5" width="9" height="8" fill="#e0ecfa" stroke="#5a90e0" stroke-dasharray="1 0.6"/><path d="M2 4l2-2 2 2 2-2" stroke="#5a90e0" fill="none"/><rect x="4.5" y="6.5" width="10" height="8" fill="#e0ecfa" stroke="#5a90e0" stroke-dasharray="1 0.6"/><path d="M6 9l2 3 2-3 2 3" stroke="#5a90e0" fill="none"/></svg><div class="t" style="left:543px;top:127px;font-size:21px;font-weight:bold;letter-spacing:0.25px">EURUSDmfu,M30</div><div class="a" style="left:1573px;top:122px;width:31px;height:31px;border:1px solid #7c7c9c;border-radius:3px;background:linear-gradient(#fdfdfe 0px,#e9e9f0 4px,#cfd0de 55%,#b9bacd)"></div><div class="a" style="left:1579px;top:142px;width:14px;height:6px;background:#fff"></div><div class="a" style="left:1579px;top:142px;width:13px;height:5px;background:#6c6c8c;border-right:1px solid #111;border-bottom:1px solid #111"></div><div class="a" style="left:1606px;top:122px;width:31px;height:31px;border:1px solid #7c7c9c;border-radius:3px;background:linear-gradient(#fdfdfe 0px,#e9e9f0 4px,#cfd0de 55%,#b9bacd)"></div><div class="a" style="left:1612px;top:128px;width:19px;height:19px;border:2px solid #15151f;border-top:1.5px solid #15151f;box-shadow:1px 1px 0 #fff, inset 1px 0 0 #fff;background:linear-gradient(#6c6c8c 0 3px,#c8c9d9 3px)"></div><div class="a" style="left:1639px;top:122px;width:32px;height:31px;border:1px solid #b23a3a;border-radius:3px;background:linear-gradient(#f2b0a0 0px,#e57566 3px,#dc6058 50%,#cf4c4c)"></div><svg class="a" style="left:1639px;top:122px" width="32" height="31"><path d="M5.5 4.5L25.5 26.5M25.5 4.5L5.5 26.5" stroke="#5a1020" stroke-width="6.2"/><path d="M5.5 4.5L25.5 26.5M25.5 4.5L5.5 26.5" stroke="#fff" stroke-width="4.6"/></svg><svg class="a" style="left:522px;top:157px;will-change:transform" width="1148" height="733" viewBox="522 157 1148 733" font-family="Liberation Sans, sans-serif"><rect x="522" y="157" width="1148" height="733" fill="#000"/><g shape-rendering="crispEdges"><line x1="557.5" y1="160" x2="557.5" y2="644" stroke="#909cb0" stroke-width="1" stroke-dasharray="3 3"/><line x1="589.5" y1="160" x2="589.5" y2="644" stroke="#909cb0" stroke-width="1" stroke-dasharray="3 3"/><line x1="621.5" y1="160" x2="621.5" y2="644" stroke="#909cb0" stroke-width="1" stroke-dasharray="3 3"/><line x1="653.5" y1="160" x2="653.5" y2="644" stroke="#909cb0" stroke-width="1" stroke-dasharray="3 3"/><line x1="685.5" y1="160" x2="685.5" y2="644" stroke="#909cb0" stroke-width="1" stroke-dasharray="3 3"/><line x1="717.5" y1="160" x2="717.5" y2="644" stroke="#909cb0" stroke-width="1" stroke-dasharray="3 3"/><line x1="749.5" y1="160" x2="749.5" y2="644" stroke="#909cb0" stroke-width="1" stroke-dasharray="3 3"/><line x1="781.5" y1="160" x2="781.5" y2="644" stroke="#909cb0" stroke-width="1" stroke-dasharray="3 3"/><line x1="813.5" y1="160" x2="813.5" y2="644" stroke="#909cb0" stroke-width="1" stroke-dasharray="3 3"/><line x1="845.5" y1="160" x2="845.5" y2="644" stroke="#909cb0" stroke-width="1" stroke-dasharray="3 3"/><line x1="877.5" y1="160" x2="877.5" y2="644" stroke="#909cb0" stroke-width="1" stroke-dasharray="3 3"/><line x1="909.5" y1="160" x2="909.5" y2="644" stroke="#909cb0" stroke-width="1" stroke-dasharray="3 3"/><line x1="941.5" y1="160" x2="941.5" y2="644" stroke="#909cb0" stroke-width="1" stroke-dasharray="3 3"/><line x1="973.5" y1="160" x2="973.5" y2="644" stroke="#909cb0" stroke-width="1" stroke-dasharray="3 3"/><line x1="1005.5" y1="160" x2="1005.5" y2="644" stroke="#909cb0" stroke-width="1" stroke-dasharray="3 3"/><line x1="1037.5" y1="160" x2="1037.5" y2="644" stroke="#909cb0" stroke-width="1" stroke-dasharray="3 3"/><line x1="1069.5" y1="160" x2="1069.5" y2="644" stroke="#909cb0" stroke-width="1" stroke-dasharray="3 3"/><line x1="1101.5" y1="160" x2="1101.5" y2="644" stroke="#909cb0" stroke-width="1" stroke-dasharray="3 3"/><line x1="1133.5" y1="160" x2="1133.5" y2="644" stroke="#909cb0" stroke-width="1" stroke-dasharray="3 3"/><line x1="1165.5" y1="160" x2="1165.5" y2="644" stroke="#909cb0" stroke-width="1" stroke-dasharray="3 3"/><line x1="1197.5" y1="160" x2="1197.5" y2="644" stroke="#909cb0" stroke-width="1" stroke-dasharray="3 3"/><line x1="1229.5" y1="160" x2="1229.5" y2="644" stroke="#909cb0" stroke-width="1" stroke-dasharray="3 3"/><line x1="1261.5" y1="160" x2="1261.5" y2="644" stroke="#909cb0" stroke-width="1" stroke-dasharray="3 3"/><line x1="1293.5" y1="160" x2="1293.5" y2="644" stroke="#909cb0" stroke-width="1" stroke-dasharray="3 3"/><line x1="1325.5" y1="160" x2="1325.5" y2="644" stroke="#909cb0" stroke-width="1" stroke-dasharray="3 3"/><line x1="1357.5" y1="160" x2="1357.5" y2="644" stroke="#909cb0" stroke-width="1" stroke-dasharray="3 3"/><line x1="1389.5" y1="160" x2="1389.5" y2="644" stroke="#909cb0" stroke-width="1" stroke-dasharray="3 3"/><line x1="1421.5" y1="160" x2="1421.5" y2="644" stroke="#909cb0" stroke-width="1" stroke-dasharray="3 3"/><line x1="1453.5" y1="160" x2="1453.5" y2="644" stroke="#909cb0" stroke-width="1" stroke-dasharray="3 3"/><line x1="1485.5" y1="160" x2="1485.5" y2="644" stroke="#909cb0" stroke-width="1" stroke-dasharray="3 3"/><line x1="1517.5" y1="160" x2="1517.5" y2="644" stroke="#909cb0" stroke-width="1" stroke-dasharray="3 3"/><line x1="1549.5" y1="160" x2="1549.5" y2="644" stroke="#909cb0" stroke-width="1" stroke-dasharray="3 3"/><line x1="1581.5" y1="160" x2="1581.5" y2="644" stroke="#909cb0" stroke-width="1" stroke-dasharray="3 3"/><line x1="1613.5" y1="160" x2="1613.5" y2="644" stroke="#909cb0" stroke-width="1" stroke-dasharray="3 3"/><line x1="557.5" y1="646" x2="557.5" y2="670" stroke="#909cb0" stroke-width="1" stroke-dasharray="3 3"/><line x1="589.5" y1="646" x2="589.5" y2="670" stroke="#909cb0" stroke-width="1" stroke-dasharray="3 3"/><line x1="621.5" y1="646" x2="621.5" y2="670" stroke="#909cb0" stroke-width="1" stroke-dasharray="3 3"/><line x1="653.5" y1="646" x2="653.5" y2="670" stroke="#909cb0" stroke-width="1" stroke-dasharray="3 3"/><line x1="685.5" y1="646" x2="685.5" y2="670" stroke="#909cb0" stroke-width="1" stroke-dasharray="3 3"/><line x1="717.5" y1="646" x2="717.5" y2="670" stroke="#909cb0" stroke-width="1" stroke-dasharray="3 3"/><line x1="749.5" y1="646" x2="749.5" y2="670" stroke="#909cb0" stroke-width="1" stroke-dasharray="3 3"/><line x1="781.5" y1="646" x2="781.5" y2="670" stroke="#909cb0" stroke-width="1" stroke-dasharray="3 3"/><line x1="813.5" y1="646" x2="813.5" y2="670" stroke="#909cb0" stroke-width="1" stroke-dasharray="3 3"/><line x1="845.5" y1="646" x2="845.5" y2="670" stroke="#909cb0" stroke-width="1" stroke-dasharray="3 3"/><line x1="877.5" y1="646" x2="877.5" y2="670" stroke="#909cb0" stroke-width="1" stroke-dasharray="3 3"/><line x1="909.5" y1="646" x2="909.5" y2="670" stroke="#909cb0" stroke-width="1" stroke-dasharray="3 3"/><line x1="941.5" y1="646" x2="941.5" y2="670" stroke="#909cb0" stroke-width="1" stroke-dasharray="3 3"/><line x1="973.5" y1="646" x2="973.5" y2="670" stroke="#909cb0" stroke-width="1" stroke-dasharray="3 3"/><line x1="1005.5" y1="646" x2="1005.5" y2="670" stroke="#909cb0" stroke-width="1" stroke-dasharray="3 3"/><line x1="1037.5" y1="646" x2="1037.5" y2="670" stroke="#909cb0" stroke-width="1" stroke-dasharray="3 3"/><line x1="1069.5" y1="646" x2="1069.5" y2="670" stroke="#909cb0" stroke-width="1" stroke-dasharray="3 3"/><line x1="1101.5" y1="646" x2="1101.5" y2="670" stroke="#909cb0" stroke-width="1" stroke-dasharray="3 3"/><line x1="1133.5" y1="646" x2="1133.5" y2="670" stroke="#909cb0" stroke-width="1" stroke-dasharray="3 3"/><line x1="1165.5" y1="646" x2="1165.5" y2="670" stroke="#909cb0" stroke-width="1" stroke-dasharray="3 3"/><line x1="1197.5" y1="646" x2="1197.5" y2="670" stroke="#909cb0" stroke-width="1" stroke-dasharray="3 3"/><line x1="1229.5" y1="646" x2="1229.5" y2="670" stroke="#909cb0" stroke-width="1" stroke-dasharray="3 3"/><line x1="1261.5" y1="646" x2="1261.5" y2="670" stroke="#909cb0" stroke-width="1" stroke-dasharray="3 3"/><line x1="1293.5" y1="646" x2="1293.5" y2="670" stroke="#909cb0" stroke-width="1" stroke-dasharray="3 3"/><line x1="1325.5" y1="646" x2="1325.5" y2="670" stroke="#909cb0" stroke-width="1" stroke-dasharray="3 3"/><line x1="1357.5" y1="646" x2="1357.5" y2="670" stroke="#909cb0" stroke-width="1" stroke-dasharray="3 3"/><line x1="1389.5" y1="646" x2="1389.5" y2="670" stroke="#909cb0" stroke-width="1" stroke-dasharray="3 3"/><line x1="1421.5" y1="646" x2="1421.5" y2="670" stroke="#909cb0" stroke-width="1" stroke-dasharray="3 3"/><line x1="1453.5" y1="646" x2="1453.5" y2="670" stroke="#909cb0" stroke-width="1" stroke-dasharray="3 3"/><line x1="1485.5" y1="646" x2="1485.5" y2="670" stroke="#909cb0" stroke-width="1" stroke-dasharray="3 3"/><line x1="1517.5" y1="646" x2="1517.5" y2="670" stroke="#909cb0" stroke-width="1" stroke-dasharray="3 3"/><line x1="1549.5" y1="646" x2="1549.5" y2="670" stroke="#909cb0" stroke-width="1" stroke-dasharray="3 3"/><line x1="1581.5" y1="646" x2="1581.5" y2="670" stroke="#909cb0" stroke-width="1" stroke-dasharray="3 3"/><line x1="1613.5" y1="646" x2="1613.5" y2="670" stroke="#909cb0" stroke-width="1" stroke-dasharray="3 3"/><line x1="557.5" y1="672" x2="557.5" y2="723" stroke="#909cb0" stroke-width="1" stroke-dasharray="3 3"/><line x1="589.5" y1="672" x2="589.5" y2="723" stroke="#909cb0" stroke-width="1" stroke-dasharray="3 3"/><line x1="621.5" y1="672" x2="621.5" y2="723" stroke="#909cb0" stroke-width="1" stroke-dasharray="3 3"/><line x1="653.5" y1="672" x2="653.5" y2="723" stroke="#909cb0" stroke-width="1" stroke-dasharray="3 3"/><line x1="685.5" y1="672" x2="685.5" y2="723" stroke="#909cb0" stroke-width="1" stroke-dasharray="3 3"/><line x1="717.5" y1="672" x2="717.5" y2="723" stroke="#909cb0" stroke-width="1" stroke-dasharray="3 3"/><line x1="749.5" y1="672" x2="749.5" y2="723" stroke="#909cb0" stroke-width="1" stroke-dasharray="3 3"/><line x1="781.5" y1="672" x2="781.5" y2="723" stroke="#909cb0" stroke-width="1" stroke-dasharray="3 3"/><line x1="813.5" y1="672" x2="813.5" y2="723" stroke="#909cb0" stroke-width="1" stroke-dasharray="3 3"/><line x1="845.5" y1="672" x2="845.5" y2="723" stroke="#909cb0" stroke-width="1" stroke-dasharray="3 3"/><line x1="877.5" y1="672" x2="877.5" y2="723" stroke="#909cb0" stroke-width="1" stroke-dasharray="3 3"/><line x1="909.5" y1="672" x2="909.5" y2="723" stroke="#909cb0" stroke-width="1" stroke-dasharray="3 3"/><line x1="941.5" y1="672" x2="941.5" y2="723" stroke="#909cb0" stroke-width="1" stroke-dasharray="3 3"/><line x1="973.5" y1="672" x2="973.5" y2="723" stroke="#909cb0" stroke-width="1" stroke-dasharray="3 3"/><line x1="1005.5" y1="672" x2="1005.5" y2="723" stroke="#909cb0" stroke-width="1" stroke-dasharray="3 3"/><line x1="1037.5" y1="672" x2="1037.5" y2="723" stroke="#909cb0" stroke-width="1" stroke-dasharray="3 3"/><line x1="1069.5" y1="672" x2="1069.5" y2="723" stroke="#909cb0" stroke-width="1" stroke-dasharray="3 3"/><line x1="1101.5" y1="672" x2="1101.5" y2="723" stroke="#909cb0" stroke-width="1" stroke-dasharray="3 3"/><line x1="1133.5" y1="672" x2="1133.5" y2="723" stroke="#909cb0" stroke-width="1" stroke-dasharray="3 3"/><line x1="1165.5" y1="672" x2="1165.5" y2="723" stroke="#909cb0" stroke-width="1" stroke-dasharray="3 3"/><line x1="1197.5" y1="672" x2="1197.5" y2="723" stroke="#909cb0" stroke-width="1" stroke-dasharray="3 3"/><line x1="1229.5" y1="672" x2="1229.5" y2="723" stroke="#909cb0" stroke-width="1" stroke-dasharray="3 3"/><line x1="1261.5" y1="672" x2="1261.5" y2="723" stroke="#909cb0" stroke-width="1" stroke-dasharray="3 3"/><line x1="1293.5" y1="672" x2="1293.5" y2="723" stroke="#909cb0" stroke-width="1" stroke-dasharray="3 3"/><line x1="1325.5" y1="672" x2="1325.5" y2="723" stroke="#909cb0" stroke-width="1" stroke-dasharray="3 3"/><line x1="1357.5" y1="672" x2="1357.5" y2="723" stroke="#909cb0" stroke-width="1" stroke-dasharray="3 3"/><line x1="1389.5" y1="672" x2="1389.5" y2="723" stroke="#909cb0" stroke-width="1" stroke-dasharray="3 3"/><line x1="1421.5" y1="672" x2="1421.5" y2="723" stroke="#909cb0" stroke-width="1" stroke-dasharray="3 3"/><line x1="1453.5" y1="672" x2="1453.5" y2="723" stroke="#909cb0" stroke-width="1" stroke-dasharray="3 3"/><line x1="1485.5" y1="672" x2="1485.5" y2="723" stroke="#909cb0" stroke-width="1" stroke-dasharray="3 3"/><line x1="1517.5" y1="672" x2="1517.5" y2="723" stroke="#909cb0" stroke-width="1" stroke-dasharray="3 3"/><line x1="1549.5" y1="672" x2="1549.5" y2="723" stroke="#909cb0" stroke-width="1" stroke-dasharray="3 3"/><line x1="1581.5" y1="672" x2="1581.5" y2="723" stroke="#909cb0" stroke-width="1" stroke-dasharray="3 3"/><line x1="1613.5" y1="672" x2="1613.5" y2="723" stroke="#909cb0" stroke-width="1" stroke-dasharray="3 3"/><line x1="557.5" y1="725" x2="557.5" y2="776" stroke="#909cb0" stroke-width="1" stroke-dasharray="3 3"/><line x1="589.5" y1="725" x2="589.5" y2="776" stroke="#909cb0" stroke-width="1" stroke-dasharray="3 3"/><line x1="621.5" y1="725" x2="621.5" y2="776" stroke="#909cb0" stroke-width="1" stroke-dasharray="3 3"/><line x1="653.5" y1="725" x2="653.5" y2="776" stroke="#909cb0" stroke-width="1" stroke-dasharray="3 3"/><line x1="685.5" y1="725" x2="685.5" y2="776" stroke="#909cb0" stroke-width="1" stroke-dasharray="3 3"/><line x1="717.5" y1="725" x2="717.5" y2="776" stroke="#909cb0" stroke-width="1" stroke-dasharray="3 3"/><line x1="749.5" y1="725" x2="749.5" y2="776" stroke="#909cb0" stroke-width="1" stroke-dasharray="3 3"/><line x1="781.5" y1="725" x2="781.5" y2="776" stroke="#909cb0" stroke-width="1" stroke-dasharray="3 3"/><line x1="813.5" y1="725" x2="813.5" y2="776" stroke="#909cb0" stroke-width="1" stroke-dasharray="3 3"/><line x1="845.5" y1="725" x2="845.5" y2="776" stroke="#909cb0" stroke-width="1" stroke-dasharray="3 3"/><line x1="877.5" y1="725" x2="877.5" y2="776" stroke="#909cb0" stroke-width="1" stroke-dasharray="3 3"/><line x1="909.5" y1="725" x2="909.5" y2="776" stroke="#909cb0" stroke-width="1" stroke-dasharray="3 3"/><line x1="941.5" y1="725" x2="941.5" y2="776" stroke="#909cb0" stroke-width="1" stroke-dasharray="3 3"/><line x1="973.5" y1="725" x2="973.5" y2="776" stroke="#909cb0" stroke-width="1" stroke-dasharray="3 3"/><line x1="1005.5" y1="725" x2="1005.5" y2="776" stroke="#909cb0" stroke-width="1" stroke-dasharray="3 3"/><line x1="1037.5" y1="725" x2="1037.5" y2="776" stroke="#909cb0" stroke-width="1" stroke-dasharray="3 3"/><line x1="1069.5" y1="725" x2="1069.5" y2="776" stroke="#909cb0" stroke-width="1" stroke-dasharray="3 3"/><line x1="1101.5" y1="725" x2="1101.5" y2="776" stroke="#909cb0" stroke-width="1" stroke-dasharray="3 3"/><line x1="1133.5" y1="725" x2="1133.5" y2="776" stroke="#909cb0" stroke-width="1" stroke-dasharray="3 3"/><line x1="1165.5" y1="725" x2="1165.5" y2="776" stroke="#909cb0" stroke-width="1" stroke-dasharray="3 3"/><line x1="1197.5" y1="725" x2="1197.5" y2="776" stroke="#909cb0" stroke-width="1" stroke-dasharray="3 3"/><line x1="1229.5" y1="725" x2="1229.5" y2="776" stroke="#909cb0" stroke-width="1" stroke-dasharray="3 3"/><line x1="1261.5" y1="725" x2="1261.5" y2="776" stroke="#909cb0" stroke-width="1" stroke-dasharray="3 3"/><line x1="1293.5" y1="725" x2="1293.5" y2="776" stroke="#909cb0" stroke-width="1" stroke-dasharray="3 3"/><line x1="1325.5" y1="725" x2="1325.5" y2="776" stroke="#909cb0" stroke-width="1" stroke-dasharray="3 3"/><line x1="1357.5" y1="725" x2="1357.5" y2="776" stroke="#909cb0" stroke-width="1" stroke-dasharray="3 3"/><line x1="1389.5" y1="725" x2="1389.5" y2="776" stroke="#909cb0" stroke-width="1" stroke-dasharray="3 3"/><line x1="1421.5" y1="725" x2="1421.5" y2="776" stroke="#909cb0" stroke-width="1" stroke-dasharray="3 3"/><line x1="1453.5" y1="725" x2="1453.5" y2="776" stroke="#909cb0" stroke-width="1" stroke-dasharray="3 3"/><line x1="1485.5" y1="725" x2="1485.5" y2="776" stroke="#909cb0" stroke-width="1" stroke-dasharray="3 3"/><line x1="1517.5" y1="725" x2="1517.5" y2="776" stroke="#909cb0" stroke-width="1" stroke-dasharray="3 3"/><line x1="1549.5" y1="725" x2="1549.5" y2="776" stroke="#909cb0" stroke-width="1" stroke-dasharray="3 3"/><line x1="1581.5" y1="725" x2="1581.5" y2="776" stroke="#909cb0" stroke-width="1" stroke-dasharray="3 3"/><line x1="1613.5" y1="725" x2="1613.5" y2="776" stroke="#909cb0" stroke-width="1" stroke-dasharray="3 3"/><line x1="557.5" y1="778" x2="557.5" y2="824" stroke="#909cb0" stroke-width="1" stroke-dasharray="3 3"/><line x1="589.5" y1="778" x2="589.5" y2="824" stroke="#909cb0" stroke-width="1" stroke-dasharray="3 3"/><line x1="621.5" y1="778" x2="621.5" y2="824" stroke="#909cb0" stroke-width="1" stroke-dasharray="3 3"/><line x1="653.5" y1="778" x2="653.5" y2="824" stroke="#909cb0" stroke-width="1" stroke-dasharray="3 3"/><line x1="685.5" y1="778" x2="685.5" y2="824" stroke="#909cb0" stroke-width="1" stroke-dasharray="3 3"/><line x1="717.5" y1="778" x2="717.5" y2="824" stroke="#909cb0" stroke-width="1" stroke-dasharray="3 3"/><line x1="749.5" y1="778" x2="749.5" y2="824" stroke="#909cb0" stroke-width="1" stroke-dasharray="3 3"/><line x1="781.5" y1="778" x2="781.5" y2="824" stroke="#909cb0" stroke-width="1" stroke-dasharray="3 3"/><line x1="813.5" y1="778" x2="813.5" y2="824" stroke="#909cb0" stroke-width="1" stroke-dasharray="3 3"/><line x1="845.5" y1="778" x2="845.5" y2="824" stroke="#909cb0" stroke-width="1" stroke-dasharray="3 3"/><line x1="877.5" y1="778" x2="877.5" y2="824" stroke="#909cb0" stroke-width="1" stroke-dasharray="3 3"/><line x1="909.5" y1="778" x2="909.5" y2="824" stroke="#909cb0" stroke-width="1" stroke-dasharray="3 3"/><line x1="941.5" y1="778" x2="941.5" y2="824" stroke="#909cb0" stroke-width="1" stroke-dasharray="3 3"/><line x1="973.5" y1="778" x2="973.5" y2="824" stroke="#909cb0" stroke-width="1" stroke-dasharray="3 3"/><line x1="1005.5" y1="778" x2="1005.5" y2="824" stroke="#909cb0" stroke-width="1" stroke-dasharray="3 3"/><line x1="1037.5" y1="778" x2="1037.5" y2="824" stroke="#909cb0" stroke-width="1" stroke-dasharray="3 3"/><line x1="1069.5" y1="778" x2="1069.5" y2="824" stroke="#909cb0" stroke-width="1" stroke-dasharray="3 3"/><line x1="1101.5" y1="778" x2="1101.5" y2="824" stroke="#909cb0" stroke-width="1" stroke-dasharray="3 3"/><line x1="1133.5" y1="778" x2="1133.5" y2="824" stroke="#909cb0" stroke-width="1" stroke-dasharray="3 3"/><line x1="1165.5" y1="778" x2="1165.5" y2="824" stroke="#909cb0" stroke-width="1" stroke-dasharray="3 3"/><line x1="1197.5" y1="778" x2="1197.5" y2="824" stroke="#909cb0" stroke-width="1" stroke-dasharray="3 3"/><line x1="1229.5" y1="778" x2="1229.5" y2="824" stroke="#909cb0" stroke-width="1" stroke-dasharray="3 3"/><line x1="1261.5" y1="778" x2="1261.5" y2="824" stroke="#909cb0" stroke-width="1" stroke-dasharray="3 3"/><line x1="1293.5" y1="778" x2="1293.5" y2="824" stroke="#909cb0" stroke-width="1" stroke-dasharray="3 3"/><line x1="1325.5" y1="778" x2="1325.5" y2="824" stroke="#909cb0" stroke-width="1" stroke-dasharray="3 3"/><line x1="1357.5" y1="778" x2="1357.5" y2="824" stroke="#909cb0" stroke-width="1" stroke-dasharray="3 3"/><line x1="1389.5" y1="778" x2="1389.5" y2="824" stroke="#909cb0" stroke-width="1" stroke-dasharray="3 3"/><line x1="1421.5" y1="778" x2="1421.5" y2="824" stroke="#909cb0" stroke-width="1" stroke-dasharray="3 3"/><line x1="1453.5" y1="778" x2="1453.5" y2="824" stroke="#909cb0" stroke-width="1" stroke-dasharray="3 3"/><line x1="1485.5" y1="778" x2="1485.5" y2="824" stroke="#909cb0" stroke-width="1" stroke-dasharray="3 3"/><line x1="1517.5" y1="778" x2="1517.5" y2="824" stroke="#909cb0" stroke-width="1" stroke-dasharray="3 3"/><line x1="1549.5" y1="778" x2="1549.5" y2="824" stroke="#909cb0" stroke-width="1" stroke-dasharray="3 3"/><line x1="1581.5" y1="778" x2="1581.5" y2="824" stroke="#909cb0" stroke-width="1" stroke-dasharray="3 3"/><line x1="1613.5" y1="778" x2="1613.5" y2="824" stroke="#909cb0" stroke-width="1" stroke-dasharray="3 3"/><line x1="557.5" y1="826" x2="557.5" y2="872" stroke="#909cb0" stroke-width="1" stroke-dasharray="3 3"/><line x1="589.5" y1="826" x2="589.5" y2="872" stroke="#909cb0" stroke-width="1" stroke-dasharray="3 3"/><line x1="621.5" y1="826" x2="621.5" y2="872" stroke="#909cb0" stroke-width="1" stroke-dasharray="3 3"/><line x1="653.5" y1="826" x2="653.5" y2="872" stroke="#909cb0" stroke-width="1" stroke-dasharray="3 3"/><line x1="685.5" y1="826" x2="685.5" y2="872" stroke="#909cb0" stroke-width="1" stroke-dasharray="3 3"/><line x1="717.5" y1="826" x2="717.5" y2="872" stroke="#909cb0" stroke-width="1" stroke-dasharray="3 3"/><line x1="749.5" y1="826" x2="749.5" y2="872" stroke="#909cb0" stroke-width="1" stroke-dasharray="3 3"/><line x1="781.5" y1="826" x2="781.5" y2="872" stroke="#909cb0" stroke-width="1" stroke-dasharray="3 3"/><line x1="813.5" y1="826" x2="813.5" y2="872" stroke="#909cb0" stroke-width="1" stroke-dasharray="3 3"/><line x1="845.5" y1="826" x2="845.5" y2="872" stroke="#909cb0" stroke-width="1" stroke-dasharray="3 3"/><line x1="877.5" y1="826" x2="877.5" y2="872" stroke="#909cb0" stroke-width="1" stroke-dasharray="3 3"/><line x1="909.5" y1="826" x2="909.5" y2="872" stroke="#909cb0" stroke-width="1" stroke-dasharray="3 3"/><line x1="941.5" y1="826" x2="941.5" y2="872" stroke="#909cb0" stroke-width="1" stroke-dasharray="3 3"/><line x1="973.5" y1="826" x2="973.5" y2="872" stroke="#909cb0" stroke-width="1" stroke-dasharray="3 3"/><line x1="1005.5" y1="826" x2="1005.5" y2="872" stroke="#909cb0" stroke-width="1" stroke-dasharray="3 3"/><line x1="1037.5" y1="826" x2="1037.5" y2="872" stroke="#909cb0" stroke-width="1" stroke-dasharray="3 3"/><line x1="1069.5" y1="826" x2="1069.5" y2="872" stroke="#909cb0" stroke-width="1" stroke-dasharray="3 3"/><line x1="1101.5" y1="826" x2="1101.5" y2="872" stroke="#909cb0" stroke-width="1" stroke-dasharray="3 3"/><line x1="1133.5" y1="826" x2="1133.5" y2="872" stroke="#909cb0" stroke-width="1" stroke-dasharray="3 3"/><line x1="1165.5" y1="826" x2="1165.5" y2="872" stroke="#909cb0" stroke-width="1" stroke-dasharray="3 3"/><line x1="1197.5" y1="826" x2="1197.5" y2="872" stroke="#909cb0" stroke-width="1" stroke-dasharray="3 3"/><line x1="1229.5" y1="826" x2="1229.5" y2="872" stroke="#909cb0" stroke-width="1" stroke-dasharray="3 3"/><line x1="1261.5" y1="826" x2="1261.5" y2="872" stroke="#909cb0" stroke-width="1" stroke-dasharray="3 3"/><line x1="1293.5" y1="826" x2="1293.5" y2="872" stroke="#909cb0" stroke-width="1" stroke-dasharray="3 3"/><line x1="1325.5" y1="826" x2="1325.5" y2="872" stroke="#909cb0" stroke-width="1" stroke-dasharray="3 3"/><line x1="1357.5" y1="826" x2="1357.5" y2="872" stroke="#909cb0" stroke-width="1" stroke-dasharray="3 3"/><line x1="1389.5" y1="826" x2="1389.5" y2="872" stroke="#909cb0" stroke-width="1" stroke-dasharray="3 3"/><line x1="1421.5" y1="826" x2="1421.5" y2="872" stroke="#909cb0" stroke-width="1" stroke-dasharray="3 3"/><line x1="1453.5" y1="826" x2="1453.5" y2="872" stroke="#909cb0" stroke-width="1" stroke-dasharray="3 3"/><line x1="1485.5" y1="826" x2="1485.5" y2="872" stroke="#909cb0" stroke-width="1" stroke-dasharray="3 3"/><line x1="1517.5" y1="826" x2="1517.5" y2="872" stroke="#909cb0" stroke-width="1" stroke-dasharray="3 3"/><line x1="1549.5" y1="826" x2="1549.5" y2="872" stroke="#909cb0" stroke-width="1" stroke-dasharray="3 3"/><line x1="1581.5" y1="826" x2="1581.5" y2="872" stroke="#909cb0" stroke-width="1" stroke-dasharray="3 3"/><line x1="1613.5" y1="826" x2="1613.5" y2="872" stroke="#909cb0" stroke-width="1" stroke-dasharray="3 3"/><line x1="526" y1="162.5" x2="1630" y2="162.5" stroke="#909cb0" stroke-width="1" stroke-dasharray="3 3"/><line x1="526" y1="194.5" x2="1630" y2="194.5" stroke="#909cb0" stroke-width="1" stroke-dasharray="3 3"/><line x1="526" y1="226.5" x2="1630" y2="226.5" stroke="#909cb0" stroke-width="1" stroke-dasharray="3 3"/><line x1="526" y1="258.5" x2="1630" y2="258.5" stroke="#909cb0" stroke-width="1" stroke-dasharray="3 3"/><line x1="526" y1="290.5" x2="1630" y2="290.5" stroke="#909cb0" stroke-width="1" stroke-dasharray="3 3"/><line x1="526" y1="322.5" x2="1630" y2="322.5" stroke="#909cb0" stroke-width="1" stroke-dasharray="3 3"/><line x1="526" y1="354.5" x2="1630" y2="354.5" stroke="#909cb0" stroke-width="1" stroke-dasharray="3 3"/><line x1="526" y1="386.5" x2="1630" y2="386.5" stroke="#909cb0" stroke-width="1" stroke-dasharray="3 3"/><line x1="526" y1="418.5" x2="1630" y2="418.5" stroke="#909cb0" stroke-width="1" stroke-dasharray="3 3"/><line x1="526" y1="450.5" x2="1630" y2="450.5" stroke="#909cb0" stroke-width="1" stroke-dasharray="3 3"/><line x1="526" y1="482.5" x2="1630" y2="482.5" stroke="#909cb0" stroke-width="1" stroke-dasharray="3 3"/><line x1="526" y1="514.5" x2="1630" y2="514.5" stroke="#909cb0" stroke-width="1" stroke-dasharray="3 3"/><line x1="526" y1="546.5" x2="1630" y2="546.5" stroke="#909cb0" stroke-width="1" stroke-dasharray="3 3"/><line x1="526" y1="578.5" x2="1630" y2="578.5" stroke="#909cb0" stroke-width="1" stroke-dasharray="3 3"/><line x1="526" y1="610.5" x2="1630" y2="610.5" stroke="#909cb0" stroke-width="1" stroke-dasharray="3 3"/><line x1="526" y1="642.5" x2="1630" y2="642.5" stroke="#909cb0" stroke-width="1" stroke-dasharray="3 3"/><line x1="526" y1="669.5" x2="1630" y2="669.5" stroke="#909cb0" stroke-width="1" stroke-dasharray="3 3"/><line x1="526" y1="775.5" x2="1630" y2="775.5" stroke="#909cb0" stroke-width="1" stroke-dasharray="3 3"/><line x1="526" y1="823.5" x2="1630" y2="823.5" stroke="#909cb0" stroke-width="1" stroke-dasharray="3 3"/><line x1="526" y1="827.5" x2="1630" y2="827.5" stroke="#909cb0" stroke-width="1" stroke-dasharray="3 3"/></g><g stroke="#d8bfd8" stroke-width="1" stroke-dasharray="3 2" shape-rendering="crispEdges"><line x1="725.5" y1="161.0" x2="725.5" y2="193.8"/><line x1="733.5" y1="161.0" x2="733.5" y2="194.0"/><line x1="741.5" y1="161.0" x2="741.5" y2="194.0"/><line x1="749.5" y1="161.0" x2="749.5" y2="194.0"/><line x1="757.5" y1="161.0" x2="757.5" y2="199.5"/><line x1="765.5" y1="161.0" x2="765.5" y2="207.9"/><line x1="773.5" y1="161.0" x2="773.5" y2="209.8"/><line x1="781.5" y1="161.0" x2="781.5" y2="211.7"/><line x1="789.5" y1="161.0" x2="789.5" y2="215.3"/><line x1="797.5" y1="161.0" x2="797.5" y2="241.8"/><line x1="805.5" y1="165.7" x2="805.5" y2="252.8"/><line x1="813.5" y1="178.7" x2="813.5" y2="264.1"/><line x1="821.5" y1="182.1" x2="821.5" y2="269.4"/><line x1="829.5" y1="194.8" x2="829.5" y2="272.9"/><line x1="837.5" y1="200.8" x2="837.5" y2="276.4"/><line x1="845.5" y1="203.7" x2="845.5" y2="284.0"/><line x1="853.5" y1="209.5" x2="853.5" y2="285.0"/><line x1="861.5" y1="226.6" x2="861.5" y2="293.4"/><line x1="869.5" y1="244.3" x2="869.5" y2="299.7"/><line x1="877.5" y1="246.0" x2="877.5" y2="299.9"/><line x1="885.5" y1="246.0" x2="885.5" y2="299.6"/><line x1="893.5" y1="246.0" x2="893.5" y2="298.9"/><line x1="901.5" y1="246.0" x2="901.5" y2="298.3"/><line x1="909.5" y1="246.0" x2="909.5" y2="297.6"/><line x1="917.5" y1="246.0" x2="917.5" y2="298.4"/><line x1="925.5" y1="250.0" x2="925.5" y2="299.2"/><line x1="933.5" y1="250.0" x2="933.5" y2="300.2"/><line x1="941.5" y1="250.0" x2="941.5" y2="304.9"/><line x1="949.5" y1="250.0" x2="949.5" y2="309.7"/><line x1="957.5" y1="250.0" x2="957.5" y2="314.4"/><line x1="965.5" y1="250.0" x2="965.5" y2="318.3"/><line x1="973.5" y1="250.0" x2="973.5" y2="316.1"/><line x1="981.5" y1="250.0" x2="981.5" y2="316.5"/><line x1="989.5" y1="250.0" x2="989.5" y2="316.9"/><line x1="997.5" y1="250.0" x2="997.5" y2="319.1"/><line x1="1005.5" y1="266.0" x2="1005.5" y2="331.8"/><line x1="1013.5" y1="268.7" x2="1013.5" y2="332.1"/><line x1="1021.5" y1="271.0" x2="1021.5" y2="332.4"/><line x1="1029.5" y1="271.0" x2="1029.5" y2="332.7"/><line x1="1037.5" y1="271.0" x2="1037.5" y2="333.0"/><line x1="1045.5" y1="271.0" x2="1045.5" y2="333.8"/><line x1="1053.5" y1="271.0" x2="1053.5" y2="334.8"/><line x1="1061.5" y1="271.0" x2="1061.5" y2="335.7"/><line x1="1069.5" y1="271.0" x2="1069.5" y2="338.9"/><line x1="1077.5" y1="271.0" x2="1077.5" y2="342.5"/><line x1="1085.5" y1="271.0" x2="1085.5" y2="346.1"/><line x1="1093.5" y1="287.0" x2="1093.5" y2="360.1"/><line x1="1101.5" y1="287.0" x2="1101.5" y2="361.0"/><line x1="1109.5" y1="287.0" x2="1109.5" y2="361.3"/><line x1="1117.5" y1="287.0" x2="1117.5" y2="361.5"/><line x1="1125.5" y1="290.4" x2="1125.5" y2="361.8"/><line x1="1133.5" y1="294.5" x2="1133.5" y2="362.0"/><line x1="1141.5" y1="298.7" x2="1141.5" y2="364.4"/><line x1="1149.5" y1="302.6" x2="1149.5" y2="366.9"/><line x1="1157.5" y1="306.4" x2="1157.5" y2="369.3"/><line x1="1165.5" y1="308.6" x2="1165.5" y2="372.6"/><line x1="1173.5" y1="321.5" x2="1173.5" y2="374.8"/><line x1="1181.5" y1="322.0" x2="1181.5" y2="377.7"/><line x1="1189.5" y1="322.4" x2="1189.5" y2="380.2"/><line x1="1197.5" y1="322.9" x2="1197.5" y2="380.6"/><line x1="1205.5" y1="336.8" x2="1205.5" y2="381.2"/><line x1="1213.5" y1="366.8" x2="1213.5" y2="396.1"/><line x1="1221.5" y1="380.2" x2="1221.5" y2="409.6"/><line x1="1229.5" y1="395.6" x2="1229.5" y2="422.2"/><line x1="1237.5" y1="395.6" x2="1237.5" y2="425.9"/><line x1="1245.5" y1="412.8" x2="1245.5" y2="440.7"/><line x1="1253.5" y1="415.0" x2="1253.5" y2="442.9"/><line x1="1261.5" y1="416.5" x2="1261.5" y2="444.9"/><line x1="1269.5" y1="422.3" x2="1269.5" y2="452.9"/><line x1="1277.5" y1="423.3" x2="1277.5" y2="455.0"/><line x1="1285.5" y1="427.9" x2="1285.5" y2="468.6"/><line x1="1293.5" y1="436.6" x2="1293.5" y2="481.6"/><line x1="1301.5" y1="436.6" x2="1301.5" y2="488.2"/><line x1="1309.5" y1="436.6" x2="1309.5" y2="489.7"/><line x1="1317.5" y1="436.7" x2="1317.5" y2="490.9"/><line x1="1325.5" y1="436.7" x2="1325.5" y2="492.1"/><line x1="1333.5" y1="436.7" x2="1333.5" y2="492.2"/><line x1="1341.5" y1="436.7" x2="1341.5" y2="490.4"/><line x1="1349.5" y1="436.7" x2="1349.5" y2="488.8"/><line x1="1357.5" y1="436.7" x2="1357.5" y2="488.4"/><line x1="1365.5" y1="436.8" x2="1365.5" y2="488.3"/><line x1="1373.5" y1="436.8" x2="1373.5" y2="488.3"/><line x1="1381.5" y1="436.8" x2="1381.5" y2="488.3"/><line x1="1389.5" y1="437.6" x2="1389.5" y2="492.7"/><line x1="1397.5" y1="439.8" x2="1397.5" y2="496.1"/><line x1="1405.5" y1="440.0" x2="1405.5" y2="500.0"/><line x1="1413.5" y1="447.0" x2="1413.5" y2="508.0"/><line x1="1421.5" y1="448.0" x2="1421.5" y2="519.2"/><line x1="1429.5" y1="448.0" x2="1429.5" y2="531.1"/><line x1="1437.5" y1="448.0" x2="1437.5" y2="536.0"/><line x1="1445.5" y1="448.0" x2="1445.5" y2="536.2"/><line x1="1453.5" y1="448.0" x2="1453.5" y2="536.5"/><line x1="1461.5" y1="448.0" x2="1461.5" y2="536.8"/><line x1="1469.5" y1="448.0" x2="1469.5" y2="538.1"/><line x1="1477.5" y1="450.8" x2="1477.5" y2="544.2"/><line x1="1485.5" y1="455.8" x2="1485.5" y2="546.7"/><line x1="1493.5" y1="463.5" x2="1493.5" y2="546.7"/><line x1="1501.5" y1="467.5" x2="1501.5" y2="546.7"/><line x1="1509.5" y1="473.5" x2="1509.5" y2="546.7"/><line x1="1517.5" y1="475.7" x2="1517.5" y2="546.7"/><line x1="1525.5" y1="476.7" x2="1525.5" y2="546.7"/><line x1="1533.5" y1="480.2" x2="1533.5" y2="546.7"/><line x1="1541.5" y1="491.4" x2="1541.5" y2="558.4"/><line x1="1549.5" y1="493.0" x2="1549.5" y2="561.6"/><line x1="1557.5" y1="496.3" x2="1557.5" y2="564.1"/><line x1="1565.5" y1="497.7" x2="1565.5" y2="566.1"/><line x1="1573.5" y1="497.7" x2="1573.5" y2="566.8"/><line x1="1581.5" y1="497.7" x2="1581.5" y2="567.4"/><line x1="1589.5" y1="497.7" x2="1589.5" y2="571.1"/><line x1="1597.5" y1="497.7" x2="1597.5" y2="576.6"/><line x1="1605.5" y1="497.7" x2="1605.5" y2="582.7"/></g><polyline points="798.8,161.6 805.9,166.3 810.6,173.4 813.0,178.7 817.7,180.0 822.5,183.0 826.0,188.8 829.6,196.0 834.3,198.9 840.0,203.0 850.0,204.4 856.0,214.6 867.0,241.0 870.0,246.0 917.0,246.0 925.0,250.0 997.0,250.0 1005.0,266.0 1020.0,271.0 1085.5,271.0 1093.0,287.0 1118.5,287.0 1143.5,300.0 1160.0,307.8 1165.9,308.8 1172.7,321.5 1199.0,323.0 1206.8,341.0 1212.7,366.3 1224.4,385.9 1228.3,395.6 1238.0,395.6 1245.9,415.0 1259.5,415.0 1266.3,422.0 1277.0,423.3 1284.9,427.8 1292.7,436.6 1386.0,436.8 1397.7,440.0 1406.0,440.0 1414.0,448.0 1472.6,448.0 1485.0,455.8 1493.0,463.5 1503.0,468.5 1510.7,474.9 1531.0,477.4 1541.0,491.4 1553.8,494.0 1559.0,497.7 1605.0,497.7" fill="none" stroke="#d8bfd8" stroke-width="1" stroke-dasharray="3 2" shape-rendering="crispEdges"/><polyline points="655.4,161.6 663.7,172.2 675.5,175.8 711.0,181.7 717.0,187.0 723.0,192.4 725.3,194.0 750.2,194.0 758.5,200.7 764.4,207.8 779.8,211.3 788.0,213.7 791.7,219.6 794.0,231.5 796.4,241.0 805.9,254.0 810.0,262.0 820.0,269.0 838.0,276.8 840.0,284.0 852.0,284.0 867.0,299.6 880.0,300.0 909.0,297.6 932.7,300.0 964.0,318.6 972.0,316.0 996.0,317.3 1004.0,331.8 1038.0,333.0 1062.0,335.8 1085.5,346.3 1093.4,360.8 1133.0,362.0 1160.0,370.2 1165.9,373.0 1177.6,376.0 1185.4,380.0 1204.9,381.0 1212.7,395.6 1228.3,422.0 1236.0,424.0 1245.9,442.4 1259.5,443.4 1269.3,453.2 1277.0,455.0 1286.8,471.7 1296.6,487.3 1306.3,489.3 1325.9,492.2 1335.6,492.2 1345.4,488.9 1360.0,488.3 1381.0,488.3 1388.8,492.6 1404.0,499.0 1414.0,509.0 1427.0,528.0 1432.0,535.8 1467.5,537.0 1477.7,544.7 1485.0,546.7 1533.5,546.7 1538.6,557.4 1551.0,562.4 1564.0,566.0 1581.7,567.5 1592.0,572.6 1604.6,582.7" fill="none" stroke="#f4a460" stroke-width="1" stroke-dasharray="3 2" shape-rendering="crispEdges"/><g shape-rendering="crispEdges"><line x1="525" y1="231.5" x2="1630" y2="231.5" stroke="#00ff00" stroke-width="1" stroke-dasharray="9 3 3 3 3 3"/><line x1="525" y1="388.5" x2="1630" y2="388.5" stroke="#00ff00" stroke-width="1" stroke-dasharray="9 3 3 3 3 3"/><line x1="525" y1="472.5" x2="1630" y2="472.5" stroke="#ff00ff" stroke-width="1" stroke-dasharray="3 3"/><line x1="525" y1="628.5" x2="1630" y2="628.5" stroke="#8c98a8" stroke-width="1"/><line x1="525" y1="629.5" x2="1630" y2="629.5" stroke="#0000ff" stroke-width="1" stroke-dasharray="9 3 3 3 3 3"/></g><polyline points="679.0,190.0 699.0,229.0 717.0,250.4 722.0,259.0 740.0,297.0 758.0,303.4 791.0,304.7 809.0,307.0 827.0,320.0 847.0,324.5 872.0,326.0 882.0,322.4 918.0,322.0 943.0,323.7 965.0,326.8 996.0,334.6 1012.0,328.4 1027.0,320.6 1046.0,312.8 1062.0,314.3 1077.0,323.7 1093.0,336.0 1118.0,364.0 1151.0,440.0 1161.8,472.0 1173.5,491.7 1189.0,500.5 1212.6,500.5 1236.0,506.3 1251.6,507.3 1269.0,517.0 1281.0,516.0 1306.6,519.3 1323.0,518.5 1348.0,511.5 1369.6,511.5 1376.0,513.0 1389.5,519.0 1397.0,520.3" fill="none" stroke="#00d2e0" stroke-width="1" shape-rendering="crispEdges"/><polyline points="522.0,184.0 560.0,202.0 598.0,226.0 644.0,266.6 687.0,294.5 720.0,318.6 745.0,328.8 766.0,332.6 796.0,331.3 827.0,340.0 872.0,346.5 918.0,353.0 949.0,365.8 996.0,373.6 1012.0,383.0 1043.0,411.0 1074.0,445.4 1105.0,467.2 1118.0,478.0 1158.0,514.0 1173.5,522.0 1193.0,525.5 1224.0,526.0 1247.7,530.7 1275.0,539.5 1290.0,541.4 1306.6,544.0 1323.0,545.5 1339.7,553.0 1356.0,558.8 1373.0,565.4 1397.0,575.9" fill="none" stroke="#00d2e0" stroke-width="1" shape-rendering="crispEdges"/><polyline points="522.0,218.0 535.0,213.0 552.5,225.0 585.5,266.6 605.8,312.0 623.5,358.0 644.0,381.0 664.0,388.4 687.0,389.7 720.0,383.0 745.0,367.0 786.0,358.0 814.0,364.0 832.0,360.5 872.0,363.0 882.0,365.6 898.0,375.7 918.0,386.0 949.0,406.0 974.0,414.8 996.0,415.7 1012.0,442.0 1027.0,479.7 1043.0,520.0 1058.0,545.0 1074.0,567.0 1093.0,582.6 1115.0,589.0 1130.6,593.0 1142.3,588.0 1154.0,568.8 1171.6,552.0 1189.0,549.0 1212.6,553.0 1228.0,551.0 1251.6,556.0 1275.0,563.0 1290.0,565.4 1317.4,569.5 1328.0,578.0 1339.7,589.5 1349.7,601.0 1363.0,611.0 1376.0,618.5 1389.5,624.3 1397.0,631.7" fill="none" stroke="#00d2e0" stroke-width="1" shape-rendering="crispEdges"/><polyline points="522.0,339.0 541.0,345.0 557.5,321.0 566.0,348.0 581.6,335.0 598.0,360.5 606.0,360.5 622.0,343.0 637.5,354.0 646.0,340.0 661.6,354.0 669.0,339.0 677.0,383.0 685.7,359.0 694.6,374.5 702.0,373.0 711.6,389.2 728.7,398.4 734.0,399.7 748.5,388.4 757.7,409.0 770.9,382.6 781.0,373.0 789.3,387.9 797.2,440.6 813.0,498.5 822.2,489.3 828.8,535.4 838.0,517.0 852.5,544.6 861.7,505.0 869.6,509.0 877.5,524.8 885.4,517.0 893.3,498.5 909.0,514.3 917.0,528.8 918.0,528.0 926.0,525.0 934.0,534.0 941.0,529.6 949.0,537.4 965.0,529.6 974.0,529.6 996.0,542.0 1005.0,541.5 1015.0,532.7 1024.0,535.8 1030.0,545.0 1037.0,543.5 1046.0,551.4 1055.0,543.6 1069.0,578.0 1077.0,534.0 1093.0,565.5 1102.0,545.0 1110.0,542.0 1115.0,566.0 1122.8,584.4 1132.6,604.0 1140.4,608.0 1154.0,602.0 1165.7,599.0 1179.4,604.0 1189.0,628.0" fill="none" stroke="#32e632" stroke-width="1" shape-rendering="crispEdges"/><g shape-rendering="crispEdges"><rect x="525" y="190" width="1" height="24" fill="#00ff00"/><rect x="523" y="198" width="5" height="13" fill="#00ff00"/><rect x="524" y="199" width="3" height="11" fill="#0000ff"/><rect x="533" y="194" width="1" height="20" fill="#00ff00"/><rect x="531" y="201" width="5" height="6" fill="#00ff00"/><rect x="532" y="202" width="3" height="4" fill="#ff0000"/><rect x="541" y="198" width="1" height="29" fill="#00ff00"/><rect x="539" y="206" width="5" height="12" fill="#00ff00"/><rect x="540" y="207" width="3" height="10" fill="#ff0000"/><rect x="549" y="207" width="1" height="39" fill="#00ff00"/><rect x="547" y="220" width="5" height="20" fill="#00ff00"/><rect x="548" y="221" width="3" height="18" fill="#ff0000"/><rect x="557" y="229" width="1" height="40" fill="#00ff00"/><rect x="555" y="239" width="5" height="21" fill="#00ff00"/><rect x="556" y="240" width="3" height="19" fill="#ff0000"/><rect x="565" y="235" width="1" height="27" fill="#00ff00"/><rect x="563" y="240" width="5" height="20" fill="#00ff00"/><rect x="564" y="241" width="3" height="18" fill="#0000ff"/><rect x="573" y="231" width="1" height="15" fill="#00ff00"/><rect x="571" y="240" width="5" height="1" fill="#00ff00"/><rect x="581" y="229" width="1" height="43" fill="#00ff00"/><rect x="579" y="236" width="5" height="33" fill="#00ff00"/><rect x="580" y="237" width="3" height="31" fill="#ff0000"/><rect x="589" y="254" width="1" height="65" fill="#00ff00"/><rect x="587" y="269" width="5" height="48" fill="#00ff00"/><rect x="588" y="270" width="3" height="46" fill="#ff0000"/><rect x="597" y="298" width="1" height="31" fill="#00ff00"/><rect x="595" y="303" width="5" height="14" fill="#00ff00"/><rect x="596" y="304" width="3" height="12" fill="#0000ff"/><rect x="605" y="303" width="1" height="57" fill="#00ff00"/><rect x="603" y="305" width="5" height="50" fill="#00ff00"/><rect x="604" y="306" width="3" height="48" fill="#ff0000"/><rect x="613" y="345" width="1" height="13" fill="#00ff00"/><rect x="611" y="346" width="5" height="11" fill="#00ff00"/><rect x="612" y="347" width="3" height="9" fill="#0000ff"/><rect x="621" y="320" width="1" height="51" fill="#00ff00"/><rect x="619" y="339" width="5" height="23" fill="#00ff00"/><rect x="620" y="340" width="3" height="21" fill="#ff0000"/><rect x="629" y="333" width="1" height="31" fill="#00ff00"/><rect x="627" y="349" width="5" height="13" fill="#00ff00"/><rect x="628" y="350" width="3" height="11" fill="#0000ff"/><rect x="637" y="322" width="1" height="33" fill="#00ff00"/><rect x="635" y="328" width="5" height="20" fill="#00ff00"/><rect x="636" y="329" width="3" height="18" fill="#0000ff"/><rect x="645" y="311" width="1" height="27" fill="#00ff00"/><rect x="643" y="316" width="5" height="12" fill="#00ff00"/><rect x="644" y="317" width="3" height="10" fill="#0000ff"/><rect x="653" y="297" width="1" height="28" fill="#00ff00"/><rect x="651" y="301" width="5" height="15" fill="#00ff00"/><rect x="652" y="302" width="3" height="13" fill="#0000ff"/><rect x="661" y="289" width="1" height="21" fill="#00ff00"/><rect x="659" y="301" width="5" height="1" fill="#00ff00"/><rect x="669" y="298" width="1" height="22" fill="#00ff00"/><rect x="667" y="300" width="5" height="15" fill="#00ff00"/><rect x="668" y="301" width="3" height="13" fill="#ff0000"/><rect x="677" y="312" width="1" height="21" fill="#00ff00"/><rect x="675" y="314" width="5" height="12" fill="#00ff00"/><rect x="676" y="315" width="3" height="10" fill="#ff0000"/><rect x="685" y="320" width="1" height="23" fill="#00ff00"/><rect x="683" y="326" width="5" height="13" fill="#00ff00"/><rect x="684" y="327" width="3" height="11" fill="#ff0000"/><rect x="693" y="338" width="1" height="22" fill="#00ff00"/><rect x="691" y="339" width="5" height="1" fill="#00ff00"/><rect x="701" y="330" width="1" height="13" fill="#00ff00"/><rect x="699" y="333" width="5" height="7" fill="#00ff00"/><rect x="700" y="334" width="3" height="5" fill="#0000ff"/><rect x="709" y="330" width="1" height="8" fill="#00ff00"/><rect x="707" y="333" width="5" height="1" fill="#00ff00"/><rect x="717" y="332" width="1" height="11" fill="#00ff00"/><rect x="715" y="334" width="5" height="5" fill="#00ff00"/><rect x="716" y="335" width="3" height="3" fill="#ff0000"/><rect x="725" y="335" width="1" height="9" fill="#00ff00"/><rect x="723" y="339" width="5" height="1" fill="#00ff00"/><rect x="733" y="330" width="1" height="11" fill="#00ff00"/><rect x="731" y="339" width="5" height="1" fill="#00ff00"/><rect x="741" y="333" width="1" height="10" fill="#00ff00"/><rect x="739" y="340" width="5" height="3" fill="#00ff00"/><rect x="740" y="341" width="3" height="1" fill="#ff0000"/><rect x="749" y="335" width="1" height="18" fill="#00ff00"/><rect x="747" y="341" width="5" height="4" fill="#00ff00"/><rect x="748" y="342" width="3" height="2" fill="#ff0000"/><rect x="757" y="333" width="1" height="14" fill="#00ff00"/><rect x="755" y="335" width="5" height="10" fill="#00ff00"/><rect x="756" y="336" width="3" height="8" fill="#0000ff"/><rect x="765" y="316" width="1" height="18" fill="#00ff00"/><rect x="763" y="320" width="5" height="13" fill="#00ff00"/><rect x="764" y="321" width="3" height="11" fill="#0000ff"/><rect x="773" y="317" width="1" height="37" fill="#00ff00"/><rect x="771" y="320" width="5" height="28" fill="#00ff00"/><rect x="772" y="321" width="3" height="26" fill="#ff0000"/><rect x="781" y="330" width="1" height="19" fill="#00ff00"/><rect x="779" y="338" width="5" height="10" fill="#00ff00"/><rect x="780" y="339" width="3" height="8" fill="#0000ff"/><rect x="789" y="324" width="1" height="15" fill="#00ff00"/><rect x="787" y="336" width="5" height="1" fill="#00ff00"/><rect x="797" y="333" width="1" height="17" fill="#00ff00"/><rect x="795" y="336" width="5" height="12" fill="#00ff00"/><rect x="796" y="337" width="3" height="10" fill="#ff0000"/><rect x="805" y="345" width="1" height="18" fill="#00ff00"/><rect x="803" y="348" width="5" height="12" fill="#00ff00"/><rect x="804" y="349" width="3" height="10" fill="#ff0000"/><rect x="813" y="353" width="1" height="10" fill="#00ff00"/><rect x="811" y="360" width="5" height="1" fill="#00ff00"/><rect x="821" y="348" width="1" height="12" fill="#00ff00"/><rect x="819" y="349" width="5" height="10" fill="#00ff00"/><rect x="820" y="350" width="3" height="8" fill="#0000ff"/><rect x="829" y="348" width="1" height="12" fill="#00ff00"/><rect x="827" y="349" width="5" height="1" fill="#00ff00"/><rect x="837" y="343" width="1" height="10" fill="#00ff00"/><rect x="835" y="350" width="5" height="3" fill="#00ff00"/><rect x="836" y="351" width="3" height="1" fill="#ff0000"/><rect x="845" y="345" width="1" height="9" fill="#00ff00"/><rect x="843" y="353" width="5" height="1" fill="#00ff00"/><rect x="853" y="338" width="1" height="16" fill="#00ff00"/><rect x="851" y="341" width="5" height="13" fill="#00ff00"/><rect x="852" y="342" width="3" height="11" fill="#0000ff"/><rect x="861" y="340" width="1" height="7" fill="#00ff00"/><rect x="859" y="341" width="5" height="4" fill="#00ff00"/><rect x="860" y="342" width="3" height="2" fill="#ff0000"/><rect x="869" y="344" width="1" height="16" fill="#00ff00"/><rect x="867" y="346" width="5" height="7" fill="#00ff00"/><rect x="868" y="347" width="3" height="5" fill="#ff0000"/><rect x="877" y="329" width="1" height="24" fill="#00ff00"/><rect x="875" y="339" width="5" height="13" fill="#00ff00"/><rect x="876" y="340" width="3" height="11" fill="#0000ff"/><rect x="885" y="335" width="1" height="66" fill="#00ff00"/><rect x="883" y="338" width="5" height="45" fill="#00ff00"/><rect x="884" y="339" width="3" height="43" fill="#ff0000"/><rect x="893" y="354" width="1" height="31" fill="#00ff00"/><rect x="891" y="359" width="5" height="24" fill="#00ff00"/><rect x="892" y="360" width="3" height="22" fill="#0000ff"/><rect x="901" y="353" width="1" height="33" fill="#00ff00"/><rect x="899" y="359" width="5" height="14" fill="#00ff00"/><rect x="900" y="360" width="3" height="12" fill="#ff0000"/><rect x="909" y="359" width="1" height="27" fill="#00ff00"/><rect x="907" y="373" width="5" height="1" fill="#00ff00"/><rect x="917" y="360" width="1" height="30" fill="#00ff00"/><rect x="915" y="373" width="5" height="13" fill="#00ff00"/><rect x="916" y="374" width="3" height="11" fill="#ff0000"/><rect x="925" y="367" width="1" height="38" fill="#00ff00"/><rect x="923" y="387" width="5" height="1" fill="#00ff00"/><rect x="933" y="385" width="1" height="26" fill="#00ff00"/><rect x="931" y="389" width="5" height="7" fill="#00ff00"/><rect x="932" y="390" width="3" height="5" fill="#ff0000"/><rect x="941" y="388" width="1" height="20" fill="#00ff00"/><rect x="939" y="395" width="5" height="5" fill="#00ff00"/><rect x="940" y="396" width="3" height="3" fill="#ff0000"/><rect x="949" y="391" width="1" height="18" fill="#00ff00"/><rect x="947" y="395" width="5" height="4" fill="#00ff00"/><rect x="948" y="396" width="3" height="2" fill="#0000ff"/><rect x="957" y="374" width="1" height="22" fill="#00ff00"/><rect x="955" y="388" width="5" height="7" fill="#00ff00"/><rect x="956" y="389" width="3" height="5" fill="#0000ff"/><rect x="965" y="386" width="1" height="28" fill="#00ff00"/><rect x="963" y="388" width="5" height="22" fill="#00ff00"/><rect x="964" y="389" width="3" height="20" fill="#ff0000"/><rect x="973" y="388" width="1" height="29" fill="#00ff00"/><rect x="971" y="391" width="5" height="18" fill="#00ff00"/><rect x="972" y="392" width="3" height="16" fill="#0000ff"/><rect x="981" y="374" width="1" height="26" fill="#00ff00"/><rect x="979" y="378" width="5" height="12" fill="#00ff00"/><rect x="980" y="379" width="3" height="10" fill="#0000ff"/><rect x="989" y="363" width="1" height="26" fill="#00ff00"/><rect x="987" y="374" width="5" height="3" fill="#00ff00"/><rect x="988" y="375" width="3" height="1" fill="#0000ff"/><rect x="997" y="370" width="1" height="19" fill="#00ff00"/><rect x="995" y="375" width="5" height="13" fill="#00ff00"/><rect x="996" y="376" width="3" height="11" fill="#ff0000"/><rect x="1005" y="386" width="1" height="62" fill="#00ff00"/><rect x="1003" y="388" width="5" height="53" fill="#00ff00"/><rect x="1004" y="389" width="3" height="51" fill="#ff0000"/><rect x="1013" y="436" width="1" height="34" fill="#00ff00"/><rect x="1011" y="441" width="5" height="26" fill="#00ff00"/><rect x="1012" y="442" width="3" height="24" fill="#ff0000"/><rect x="1021" y="491" width="1" height="10" fill="#00ff00"/><rect x="1019" y="496" width="5" height="1" fill="#00ff00"/><rect x="1029" y="486" width="1" height="14" fill="#00ff00"/><rect x="1027" y="489" width="5" height="9" fill="#00ff00"/><rect x="1028" y="490" width="3" height="7" fill="#0000ff"/><rect x="1037" y="511" width="1" height="30" fill="#00ff00"/><rect x="1035" y="516" width="5" height="20" fill="#00ff00"/><rect x="1036" y="517" width="3" height="18" fill="#ff0000"/><rect x="1045" y="514" width="1" height="23" fill="#00ff00"/><rect x="1043" y="516" width="5" height="19" fill="#00ff00"/><rect x="1044" y="517" width="3" height="17" fill="#0000ff"/><rect x="1053" y="511" width="1" height="23" fill="#00ff00"/><rect x="1051" y="516" width="5" height="16" fill="#00ff00"/><rect x="1052" y="517" width="3" height="14" fill="#ff0000"/><rect x="1061" y="526" width="1" height="22" fill="#00ff00"/><rect x="1059" y="532" width="5" height="13" fill="#00ff00"/><rect x="1060" y="533" width="3" height="11" fill="#ff0000"/><rect x="1069" y="500" width="1" height="47" fill="#00ff00"/><rect x="1067" y="505" width="5" height="40" fill="#00ff00"/><rect x="1068" y="506" width="3" height="38" fill="#0000ff"/><rect x="1077" y="500" width="1" height="11" fill="#00ff00"/><rect x="1075" y="505" width="5" height="4" fill="#00ff00"/><rect x="1076" y="506" width="3" height="2" fill="#ff0000"/><rect x="1085" y="506" width="1" height="35" fill="#00ff00"/><rect x="1083" y="509" width="5" height="16" fill="#00ff00"/><rect x="1084" y="510" width="3" height="14" fill="#ff0000"/><rect x="1093" y="508" width="1" height="19" fill="#00ff00"/><rect x="1091" y="517" width="5" height="8" fill="#00ff00"/><rect x="1092" y="518" width="3" height="6" fill="#0000ff"/><rect x="1101" y="495" width="1" height="22" fill="#00ff00"/><rect x="1099" y="498" width="5" height="16" fill="#00ff00"/><rect x="1100" y="499" width="3" height="14" fill="#0000ff"/><rect x="1109" y="495" width="1" height="19" fill="#00ff00"/><rect x="1107" y="500" width="5" height="8" fill="#00ff00"/><rect x="1108" y="501" width="3" height="6" fill="#ff0000"/><rect x="1117" y="501" width="1" height="19" fill="#00ff00"/><rect x="1115" y="508" width="5" height="8" fill="#00ff00"/><rect x="1116" y="509" width="3" height="6" fill="#ff0000"/><rect x="1125" y="511" width="1" height="19" fill="#00ff00"/><rect x="1123" y="516" width="5" height="13" fill="#00ff00"/><rect x="1124" y="517" width="3" height="11" fill="#ff0000"/><rect x="1133" y="522" width="1" height="10" fill="#00ff00"/><rect x="1131" y="525" width="5" height="4" fill="#00ff00"/><rect x="1132" y="526" width="3" height="2" fill="#0000ff"/><rect x="1141" y="524" width="1" height="16" fill="#00ff00"/><rect x="1139" y="525" width="5" height="11" fill="#00ff00"/><rect x="1140" y="526" width="3" height="9" fill="#ff0000"/><rect x="1149" y="522" width="1" height="18" fill="#00ff00"/><rect x="1147" y="530" width="5" height="6" fill="#00ff00"/><rect x="1148" y="531" width="3" height="4" fill="#0000ff"/><rect x="1157" y="527" width="1" height="13" fill="#00ff00"/><rect x="1155" y="531" width="5" height="8" fill="#00ff00"/><rect x="1156" y="532" width="3" height="6" fill="#ff0000"/><rect x="1165" y="527" width="1" height="13" fill="#00ff00"/><rect x="1163" y="533" width="5" height="6" fill="#00ff00"/><rect x="1164" y="534" width="3" height="4" fill="#0000ff"/><rect x="1173" y="521" width="1" height="18" fill="#00ff00"/><rect x="1171" y="530" width="5" height="3" fill="#00ff00"/><rect x="1172" y="531" width="3" height="1" fill="#0000ff"/><rect x="1181" y="529" width="1" height="19" fill="#00ff00"/><rect x="1179" y="530" width="5" height="1" fill="#00ff00"/><rect x="1189" y="524" width="1" height="19" fill="#00ff00"/><rect x="1187" y="530" width="5" height="7" fill="#00ff00"/><rect x="1188" y="531" width="3" height="5" fill="#ff0000"/><rect x="1197" y="519" width="1" height="28" fill="#00ff00"/><rect x="1195" y="536" width="5" height="5" fill="#00ff00"/><rect x="1196" y="537" width="3" height="3" fill="#ff0000"/><rect x="1205" y="532" width="1" height="35" fill="#00ff00"/><rect x="1203" y="541" width="5" height="1" fill="#00ff00"/><rect x="1213" y="526" width="1" height="25" fill="#00ff00"/><rect x="1211" y="542" width="5" height="1" fill="#00ff00"/><rect x="1221" y="531" width="1" height="19" fill="#00ff00"/><rect x="1219" y="533" width="5" height="10" fill="#00ff00"/><rect x="1220" y="534" width="3" height="8" fill="#0000ff"/><rect x="1229" y="523" width="1" height="20" fill="#00ff00"/><rect x="1227" y="533" width="5" height="3" fill="#00ff00"/><rect x="1228" y="534" width="3" height="1" fill="#ff0000"/><rect x="1237" y="529" width="1" height="17" fill="#00ff00"/><rect x="1235" y="536" width="5" height="9" fill="#00ff00"/><rect x="1236" y="537" width="3" height="7" fill="#ff0000"/><rect x="1245" y="540" width="1" height="12" fill="#00ff00"/><rect x="1243" y="545" width="5" height="1" fill="#00ff00"/><rect x="1253" y="535" width="1" height="25" fill="#00ff00"/><rect x="1251" y="544" width="5" height="8" fill="#00ff00"/><rect x="1252" y="545" width="3" height="6" fill="#ff0000"/><rect x="1261" y="540" width="1" height="13" fill="#00ff00"/><rect x="1259" y="545" width="5" height="8" fill="#00ff00"/><rect x="1260" y="546" width="3" height="6" fill="#0000ff"/><rect x="1269" y="544" width="1" height="34" fill="#00ff00"/><rect x="1267" y="545" width="5" height="18" fill="#00ff00"/><rect x="1268" y="546" width="3" height="16" fill="#ff0000"/><rect x="1277" y="556" width="1" height="30" fill="#00ff00"/><rect x="1275" y="564" width="5" height="15" fill="#00ff00"/><rect x="1276" y="565" width="3" height="13" fill="#ff0000"/><rect x="1285" y="498" width="1" height="99" fill="#00ff00"/><rect x="1283" y="532" width="5" height="25" fill="#00ff00"/><rect x="1284" y="533" width="3" height="23" fill="#0000ff"/><rect x="1293" y="502" width="1" height="68" fill="#00ff00"/><rect x="1291" y="529" width="5" height="17" fill="#00ff00"/><rect x="1292" y="530" width="3" height="15" fill="#ff0000"/><rect x="1301" y="529" width="1" height="54" fill="#00ff00"/><rect x="1299" y="549" width="5" height="17" fill="#00ff00"/><rect x="1300" y="550" width="3" height="15" fill="#ff0000"/><rect x="1309" y="506" width="1" height="63" fill="#00ff00"/><rect x="1307" y="547" width="5" height="19" fill="#00ff00"/><rect x="1308" y="548" width="3" height="17" fill="#0000ff"/><rect x="1317" y="520" width="1" height="26" fill="#00ff00"/><rect x="1315" y="542" width="5" height="3" fill="#00ff00"/><rect x="1316" y="543" width="3" height="1" fill="#0000ff"/><rect x="1325" y="538" width="1" height="53" fill="#00ff00"/><rect x="1323" y="542" width="5" height="34" fill="#00ff00"/><rect x="1324" y="543" width="3" height="32" fill="#ff0000"/><rect x="1333" y="571" width="1" height="51" fill="#00ff00"/><rect x="1331" y="575" width="5" height="13" fill="#00ff00"/><rect x="1332" y="576" width="3" height="11" fill="#ff0000"/><rect x="1341" y="586" width="1" height="37" fill="#00ff00"/><rect x="1339" y="588" width="5" height="16" fill="#00ff00"/><rect x="1340" y="589" width="3" height="14" fill="#ff0000"/><rect x="1349" y="602" width="1" height="30" fill="#00ff00"/><rect x="1347" y="602" width="5" height="7" fill="#00ff00"/><rect x="1348" y="603" width="3" height="5" fill="#ff0000"/><rect x="1357" y="594" width="1" height="17" fill="#00ff00"/><rect x="1355" y="604" width="5" height="5" fill="#00ff00"/><rect x="1356" y="605" width="3" height="3" fill="#0000ff"/><rect x="1365" y="587" width="1" height="18" fill="#00ff00"/><rect x="1363" y="601" width="5" height="5" fill="#00ff00"/><rect x="1364" y="602" width="3" height="3" fill="#0000ff"/><rect x="1373" y="592" width="1" height="20" fill="#00ff00"/><rect x="1371" y="599" width="5" height="3" fill="#00ff00"/><rect x="1372" y="600" width="3" height="1" fill="#0000ff"/><rect x="1381" y="594" width="1" height="11" fill="#00ff00"/><rect x="1379" y="600" width="5" height="1" fill="#00ff00"/><rect x="1389" y="599" width="1" height="9" fill="#00ff00"/><rect x="1387" y="600" width="5" height="6" fill="#00ff00"/><rect x="1388" y="601" width="3" height="4" fill="#ff0000"/><rect x="1397" y="604" width="1" height="27" fill="#00ff00"/><rect x="1395" y="605" width="5" height="23" fill="#00ff00"/><rect x="1396" y="606" width="3" height="21" fill="#ff0000"/></g><g shape-rendering="crispEdges"><line x1="1077.5" y1="160" x2="1077.5" y2="872" stroke="#ff0000" stroke-width="1"/><rect x="1075" y="161" width="5" height="5" fill="#ff0000"/><rect x="1076" y="162" width="3" height="3" fill="#fff"/><rect x="1075" y="639" width="5" height="5" fill="#ff0000"/><rect x="1076" y="640" width="3" height="3" fill="#fff"/><line x1="1405.5" y1="160" x2="1405.5" y2="872" stroke="#ff0000" stroke-width="1"/><rect x="1403" y="161" width="5" height="5" fill="#ff0000"/><rect x="1404" y="162" width="3" height="3" fill="#fff"/><rect x="1403" y="639" width="5" height="5" fill="#ff0000"/><rect x="1404" y="640" width="3" height="3" fill="#fff"/></g><g shape-rendering="crispEdges"><rect x="525" y="654" width="4" height="15" fill="#ff0000"/><rect x="530" y="657" width="7" height="12" fill="#ff0000"/><rect x="538" y="657" width="7" height="12" fill="#007800"/><rect x="546" y="657" width="7" height="12" fill="#007800"/><rect x="554" y="654" width="7" height="15" fill="#007800"/><rect x="562" y="658" width="7" height="11" fill="#ff0000"/><rect x="570" y="658" width="7" height="11" fill="#ff0000"/><rect x="578" y="656" width="7" height="13" fill="#007800"/><rect x="586" y="650" width="7" height="19" fill="#007800"/><rect x="594" y="650" width="7" height="19" fill="#ff0000"/><rect x="602" y="650" width="7" height="19" fill="#ff0000"/><rect x="610" y="666" width="7" height="3" fill="#ff0000"/><rect x="618" y="652" width="7" height="17" fill="#007800"/><rect x="626" y="652" width="7" height="17" fill="#ff0000"/><rect x="634" y="654" width="7" height="15" fill="#ff0000"/><rect x="642" y="656" width="7" height="13" fill="#ff0000"/><rect x="650" y="660" width="7" height="9" fill="#ff0000"/><rect x="658" y="662" width="7" height="7" fill="#ff0000"/><rect x="666" y="663" width="7" height="6" fill="#ff0000"/><rect x="674" y="664" width="7" height="5" fill="#ff0000"/><rect x="682" y="663" width="7" height="6" fill="#007800"/><rect x="690" y="661" width="7" height="8" fill="#007800"/><rect x="698" y="665" width="7" height="4" fill="#ff0000"/><rect x="706" y="665" width="7" height="4" fill="#007800"/><rect x="714" y="667" width="7" height="2" fill="#ff0000"/><rect x="722" y="667" width="7" height="2" fill="#ff0000"/><rect x="730" y="667" width="7" height="2" fill="#ff0000"/><rect x="738" y="667" width="7" height="2" fill="#ff0000"/><rect x="746" y="666" width="7" height="3" fill="#007800"/><rect x="754" y="667" width="7" height="2" fill="#ff0000"/><rect x="762" y="663" width="7" height="6" fill="#007800"/><rect x="770" y="662" width="7" height="7" fill="#007800"/><rect x="778" y="663" width="7" height="6" fill="#ff0000"/><rect x="786" y="664" width="7" height="5" fill="#ff0000"/><rect x="794" y="664" width="7" height="5" fill="#007800"/><rect x="802" y="662" width="7" height="7" fill="#007800"/><rect x="810" y="663" width="7" height="6" fill="#ff0000"/><rect x="818" y="664" width="7" height="5" fill="#ff0000"/><rect x="826" y="666" width="7" height="3" fill="#ff0000"/><rect x="834" y="665" width="7" height="4" fill="#007800"/><rect x="842" y="665" width="7" height="4" fill="#007800"/><rect x="850" y="665" width="7" height="4" fill="#007800"/><rect x="858" y="664" width="7" height="5" fill="#007800"/><rect x="866" y="663" width="7" height="6" fill="#007800"/><rect x="874" y="659" width="7" height="10" fill="#007800"/><rect x="882" y="654" width="7" height="15" fill="#007800"/><rect x="890" y="656" width="7" height="13" fill="#ff0000"/><rect x="898" y="657" width="7" height="12" fill="#ff0000"/><rect x="906" y="657" width="7" height="12" fill="#ff0000"/><rect x="914" y="656" width="7" height="13" fill="#007800"/><rect x="922" y="657" width="7" height="12" fill="#ff0000"/><rect x="930" y="655" width="7" height="14" fill="#007800"/><rect x="938" y="658" width="7" height="11" fill="#ff0000"/><rect x="946" y="660" width="7" height="9" fill="#ff0000"/><rect x="954" y="659" width="7" height="10" fill="#007800"/><rect x="962" y="657" width="7" height="12" fill="#007800"/><rect x="970" y="655" width="7" height="14" fill="#007800"/><rect x="978" y="655" width="7" height="14" fill="#ff0000"/><rect x="986" y="655" width="7" height="14" fill="#007800"/><rect x="994" y="655" width="7" height="14" fill="#ff0000"/><rect x="1002" y="650" width="7" height="19" fill="#007800"/><rect x="1010" y="657" width="7" height="12" fill="#ff0000"/><rect x="1018" y="666" width="7" height="3" fill="#ff0000"/><rect x="1026" y="665" width="7" height="4" fill="#007800"/><rect x="1034" y="665" width="7" height="4" fill="#ff0000"/><rect x="1042" y="665" width="7" height="4" fill="#007800"/><rect x="1050" y="665" width="7" height="4" fill="#ff0000"/><rect x="1058" y="662" width="7" height="7" fill="#007800"/><rect x="1066" y="662" width="7" height="7" fill="#007800"/><rect x="1074" y="663" width="7" height="6" fill="#ff0000"/><rect x="1082" y="660" width="7" height="9" fill="#007800"/><rect x="1090" y="663" width="7" height="6" fill="#ff0000"/><rect x="1098" y="663" width="7" height="6" fill="#007800"/><rect x="1106" y="664" width="7" height="5" fill="#ff0000"/><rect x="1114" y="664" width="7" height="5" fill="#007800"/><rect x="1122" y="662" width="7" height="7" fill="#007800"/><rect x="1130" y="665" width="7" height="4" fill="#ff0000"/><rect x="1138" y="663" width="7" height="6" fill="#007800"/><rect x="1146" y="664" width="7" height="5" fill="#ff0000"/><rect x="1154" y="664" width="7" height="5" fill="#007800"/><rect x="1162" y="663" width="7" height="6" fill="#007800"/><rect x="1170" y="663" width="7" height="6" fill="#007800"/><rect x="1178" y="658" width="7" height="11" fill="#007800"/><rect x="1186" y="658" width="7" height="11" fill="#007800"/><rect x="1194" y="658" width="7" height="11" fill="#007800"/><rect x="1202" y="655" width="7" height="14" fill="#007800"/><rect x="1210" y="659" width="7" height="10" fill="#ff0000"/><rect x="1218" y="660" width="7" height="9" fill="#ff0000"/><rect x="1226" y="658" width="7" height="11" fill="#007800"/><rect x="1234" y="660" width="7" height="9" fill="#ff0000"/><rect x="1242" y="661" width="7" height="8" fill="#ff0000"/><rect x="1250" y="660" width="7" height="9" fill="#007800"/><rect x="1258" y="661" width="7" height="8" fill="#ff0000"/><rect x="1266" y="658" width="7" height="11" fill="#007800"/><rect x="1274" y="656" width="7" height="13" fill="#007800"/><rect x="1282" y="649" width="7" height="20" fill="#007800"/><rect x="1290" y="653" width="7" height="16" fill="#ff0000"/><rect x="1298" y="660" width="7" height="9" fill="#ff0000"/><rect x="1306" y="661" width="7" height="8" fill="#ff0000"/><rect x="1314" y="664" width="7" height="5" fill="#ff0000"/><rect x="1322" y="659" width="7" height="10" fill="#007800"/><rect x="1330" y="655" width="7" height="14" fill="#007800"/><rect x="1338" y="659" width="7" height="10" fill="#ff0000"/><rect x="1346" y="660" width="7" height="9" fill="#ff0000"/><rect x="1354" y="663" width="7" height="6" fill="#ff0000"/><rect x="1362" y="664" width="7" height="5" fill="#ff0000"/><rect x="1370" y="665" width="7" height="4" fill="#ff0000"/><rect x="1378" y="665" width="7" height="4" fill="#007800"/><rect x="1386" y="665" width="7" height="4" fill="#007800"/><rect x="1394" y="664" width="7" height="5" fill="#007800"/></g><g shape-rendering="crispEdges"><rect x="525" y="673" width="3" height="18" fill="#00ff00"/><rect x="531" y="673" width="5" height="17" fill="#00ff00"/><rect x="539" y="673" width="5" height="18" fill="#00ff00"/><rect x="547" y="673" width="5" height="19" fill="#00ff00"/><rect x="555" y="673" width="5" height="23" fill="#00ff00"/><rect x="563" y="673" width="5" height="24" fill="#00ff00"/><rect x="571" y="673" width="5" height="24" fill="#00ff00"/><rect x="579" y="673" width="5" height="26" fill="#00ff00"/><rect x="587" y="673" width="5" height="32" fill="#00ff00"/><rect x="595" y="673" width="5" height="34" fill="#00ff00"/><rect x="603" y="673" width="5" height="41" fill="#00ff00"/><rect x="611" y="673" width="5" height="44" fill="#00ff00"/><rect x="619" y="673" width="5" height="48" fill="#00ff00"/><rect x="627" y="673" width="5" height="49" fill="#00ff00"/><rect x="635" y="673" width="5" height="47" fill="#00ff00"/><rect x="643" y="673" width="5" height="45" fill="#00ff00"/><rect x="651" y="673" width="5" height="41" fill="#00ff00"/><rect x="659" y="673" width="5" height="38" fill="#00ff00"/><rect x="667" y="673" width="5" height="36" fill="#00ff00"/><rect x="675" y="673" width="5" height="35" fill="#00ff00"/><rect x="683" y="673" width="5" height="35" fill="#00ff00"/><rect x="691" y="673" width="5" height="35" fill="#00ff00"/><rect x="699" y="673" width="5" height="33" fill="#00ff00"/><rect x="707" y="673" width="5" height="32" fill="#00ff00"/><rect x="715" y="673" width="5" height="31" fill="#00ff00"/><rect x="723" y="673" width="5" height="30" fill="#00ff00"/><rect x="731" y="673" width="5" height="29" fill="#00ff00"/><rect x="739" y="673" width="5" height="28" fill="#00ff00"/><rect x="747" y="673" width="5" height="27" fill="#00ff00"/><rect x="755" y="673" width="5" height="25" fill="#00ff00"/><rect x="763" y="673" width="5" height="22" fill="#00ff00"/><rect x="771" y="673" width="5" height="22" fill="#00ff00"/><rect x="779" y="673" width="5" height="21" fill="#00ff00"/><rect x="787" y="673" width="5" height="20" fill="#00ff00"/><rect x="795" y="673" width="5" height="18" fill="#00ff00"/><rect x="803" y="673" width="5" height="20" fill="#00ff00"/><rect x="811" y="673" width="5" height="20" fill="#00ff00"/><rect x="819" y="673" width="5" height="19" fill="#00ff00"/><rect x="827" y="673" width="5" height="19" fill="#00ff00"/><rect x="835" y="673" width="5" height="18" fill="#00ff00"/><rect x="843" y="673" width="5" height="17" fill="#00ff00"/><rect x="851" y="673" width="5" height="15" fill="#00ff00"/><rect x="859" y="673" width="5" height="14" fill="#00ff00"/><rect x="867" y="673" width="5" height="14" fill="#00ff00"/><rect x="875" y="673" width="5" height="12" fill="#00ff00"/><rect x="883" y="673" width="5" height="15" fill="#00ff00"/><rect x="891" y="673" width="5" height="14" fill="#00ff00"/><rect x="899" y="673" width="5" height="14" fill="#00ff00"/><rect x="907" y="673" width="5" height="15" fill="#00ff00"/><rect x="915" y="673" width="5" height="17" fill="#00ff00"/><rect x="923" y="673" width="5" height="18" fill="#00ff00"/><rect x="931" y="673" width="5" height="19" fill="#00ff00"/><rect x="939" y="673" width="5" height="20" fill="#00ff00"/><rect x="947" y="673" width="5" height="20" fill="#00ff00"/><rect x="955" y="673" width="5" height="20" fill="#00ff00"/><rect x="963" y="673" width="5" height="21" fill="#00ff00"/><rect x="971" y="673" width="5" height="19" fill="#00ff00"/><rect x="979" y="673" width="5" height="18" fill="#00ff00"/><rect x="987" y="673" width="5" height="16" fill="#00ff00"/><rect x="995" y="673" width="5" height="15" fill="#00ff00"/><rect x="1003" y="673" width="5" height="18" fill="#00ff00"/><rect x="1011" y="673" width="5" height="23" fill="#00ff00"/><rect x="1019" y="673" width="5" height="30" fill="#00ff00"/><rect x="1027" y="673" width="5" height="33" fill="#00ff00"/><rect x="1035" y="673" width="5" height="40" fill="#00ff00"/><rect x="1043" y="673" width="5" height="42" fill="#00ff00"/><rect x="1051" y="673" width="5" height="46" fill="#00ff00"/><rect x="1059" y="673" width="5" height="49" fill="#00ff00"/><rect x="1067" y="673" width="5" height="47" fill="#00ff00"/><rect x="1075" y="673" width="5" height="46" fill="#00ff00"/><rect x="1083" y="673" width="5" height="46" fill="#00ff00"/><rect x="1091" y="673" width="5" height="43" fill="#00ff00"/><rect x="1099" y="673" width="5" height="41" fill="#00ff00"/><rect x="1107" y="673" width="5" height="39" fill="#00ff00"/><rect x="1115" y="673" width="5" height="38" fill="#00ff00"/><rect x="1123" y="673" width="5" height="37" fill="#00ff00"/><rect x="1131" y="673" width="5" height="36" fill="#00ff00"/><rect x="1139" y="673" width="5" height="36" fill="#00ff00"/><rect x="1147" y="673" width="5" height="35" fill="#00ff00"/><rect x="1155" y="673" width="5" height="34" fill="#00ff00"/><rect x="1163" y="673" width="5" height="33" fill="#00ff00"/><rect x="1171" y="673" width="5" height="31" fill="#00ff00"/><rect x="1179" y="673" width="5" height="30" fill="#00ff00"/><rect x="1187" y="673" width="5" height="29" fill="#00ff00"/><rect x="1195" y="673" width="5" height="28" fill="#00ff00"/><rect x="1203" y="673" width="5" height="27" fill="#00ff00"/><rect x="1211" y="673" width="5" height="26" fill="#00ff00"/><rect x="1219" y="673" width="5" height="24" fill="#00ff00"/><rect x="1227" y="673" width="5" height="23" fill="#00ff00"/><rect x="1235" y="673" width="5" height="22" fill="#00ff00"/><rect x="1243" y="673" width="5" height="22" fill="#00ff00"/><rect x="1251" y="673" width="5" height="21" fill="#00ff00"/><rect x="1259" y="673" width="5" height="21" fill="#00ff00"/><rect x="1267" y="673" width="5" height="21" fill="#00ff00"/><rect x="1275" y="673" width="5" height="22" fill="#00ff00"/><rect x="1283" y="673" width="5" height="20" fill="#00ff00"/><rect x="1291" y="673" width="5" height="18" fill="#00ff00"/><rect x="1299" y="673" width="5" height="19" fill="#00ff00"/><rect x="1307" y="673" width="5" height="17" fill="#00ff00"/><rect x="1315" y="673" width="5" height="15" fill="#00ff00"/><rect x="1323" y="673" width="5" height="17" fill="#00ff00"/><rect x="1331" y="673" width="5" height="18" fill="#00ff00"/><rect x="1339" y="673" width="5" height="21" fill="#00ff00"/><rect x="1347" y="673" width="5" height="23" fill="#00ff00"/><rect x="1355" y="673" width="5" height="24" fill="#00ff00"/><rect x="1363" y="673" width="5" height="25" fill="#00ff00"/><rect x="1371" y="673" width="5" height="24" fill="#00ff00"/><rect x="1379" y="673" width="5" height="24" fill="#00ff00"/><rect x="1387" y="673" width="5" height="24" fill="#00ff00"/><rect x="1395" y="673" width="5" height="26" fill="#00ff00"/></g><line x1="526" y1="673.5" x2="1630" y2="673.5" stroke="#ff0000" stroke-width="1" stroke-dasharray="3 3"/><polyline points="525.0,691.5 568.0,691.5 593.0,695.0 628.6,708.4 646.4,713.8 658.8,715.5 673.0,715.0 699.7,709.3 753.0,702.2 788.6,696.0 818.0,693.0 853.5,691.5 889.0,687.4 933.5,687.4 956.6,690.6 1013.5,691.5 1031.0,693.3 1049.0,698.6 1075.7,712.0 1093.5,716.4 1114.0,716.4 1167.0,709.3 1220.6,701.3 1274.0,695.4 1309.5,691.5 1361.0,691.5 1364.6,692.4 1377.0,692.4 1391.0,694.2 1396.6,695.4" fill="none" stroke="#ff0000" stroke-width="1" shape-rendering="crispEdges"/><g shape-rendering="crispEdges"><line x1="526" y1="736.5" x2="1630" y2="736.5" stroke="#00ff00" stroke-width="1" stroke-dasharray="3 3"/><line x1="526" y1="766.5" x2="1630" y2="766.5" stroke="#00ff00" stroke-width="1" stroke-dasharray="3 3"/><line x1="526" y1="793.5" x2="1630" y2="793.5" stroke="#00ff00" stroke-width="1" stroke-dasharray="3 3"/><line x1="526" y1="810.5" x2="1630" y2="810.5" stroke="#00ff00" stroke-width="1" stroke-dasharray="3 3"/><line x1="526" y1="836.5" x2="1630" y2="836.5" stroke="#00ff00" stroke-width="1" stroke-dasharray="3 3"/><line x1="526" y1="863.5" x2="1630" y2="863.5" stroke="#00ff00" stroke-width="1" stroke-dasharray="3 3"/></g><polyline points="525.2,751.3 532.7,752.6 541.5,752.6 557.5,767.3 566.4,764.7 575.3,761.5 581.5,761.5 589.5,769.1 596.6,770.3 605.5,770.9 621.5,772.1 628.6,770.0 636.6,763.8 646.4,746.9 653.5,736.2 660.6,731.2 667.7,733.6 676.6,745.1 685.5,760.2 693.5,766.1 701.5,763.8 710.4,756.7 717.5,751.3 726.4,747.8 735.3,748.7 742.4,753.1 749.5,762.0 756.6,751.3 765.5,740.7 774.4,746.9 781.5,752.2 790.3,758.4 797.5,759.3 806.3,765.5 813.5,770.9 818.0,767.3 826.9,763.8 837.5,754.0 844.7,752.6 853.5,743.3 860.7,741.2 867.8,743.3 876.6,746.9 885.5,757.2 892.6,753.1 901.5,756.1 908.6,754.0 917.5,760.2 933.5,766.1 942.4,764.7 956.6,759.3 965.5,759.3 981.5,748.7 989.5,738.3 997.5,739.8 1004.6,752.2 1013.5,766.4 1022.4,773.5 1038.4,773.5 1054.4,770.0 1063.2,766.4 1070.4,755.8 1077.5,745.1 1086.3,738.3 1093.5,740.7 1102.3,738.9 1109.5,737.1 1114.0,738.9 1117.6,739.8 1124.7,751.3 1133.5,762.9 1141.5,772.6 1149.5,769.1 1158.4,767.9 1165.5,766.4 1173.5,763.8 1181.5,750.1 1190.4,750.1 1197.5,754.0 1204.6,755.4 1213.5,753.1 1220.6,748.7 1229.5,745.1 1238.4,745.1 1245.5,748.7 1254.4,759.3 1261.5,760.2 1277.5,762.5 1285.5,754.0 1293.5,752.6 1302.4,752.6 1309.5,754.3 1318.4,753.1 1325.5,754.9 1334.4,759.3 1343.3,765.5 1357.5,765.5 1366.4,761.1 1373.5,754.0 1382.3,745.1 1389.5,746.5 1396.6,757.5" fill="none" stroke="#20b2aa" stroke-width="1" shape-rendering="crispEdges"/><polyline points="525.2,753.1 541.5,752.6 548.7,754.9 557.5,760.2 566.4,764.3 581.5,763.2 589.5,764.7 604.6,770.3 618.9,770.9 628.6,770.3 637.5,768.6 646.4,757.5 657.1,743.3 664.2,736.2 669.5,734.8 676.6,738.0 685.5,748.7 694.4,757.5 701.5,763.2 710.4,760.2 717.5,756.7 726.4,750.8 735.3,749.5 742.4,750.4 749.5,754.3 756.6,754.9 765.5,750.4 772.6,746.9 781.5,746.3 788.6,752.2 797.5,756.7 806.3,762.0 815.2,766.1 818.0,768.6 828.7,767.9 835.8,762.9 844.7,757.5 853.5,750.4 862.4,745.1 871.3,743.7 878.4,745.1 885.5,749.5 894.4,752.6 903.3,755.4 910.4,754.9 917.5,756.7 924.6,759.3 933.5,763.2 942.4,765.0 951.3,763.2 965.5,760.2 981.5,754.3 988.6,748.7 997.5,743.0 1004.6,744.2 1013.5,753.1 1022.4,763.8 1031.3,771.8 1038.4,773.5 1049.0,772.1 1063.2,768.6 1070.4,763.8 1077.5,755.8 1086.3,746.0 1093.5,741.5 1102.3,740.1 1109.5,738.9 1114.0,738.9 1122.9,741.5 1133.5,753.1 1141.5,763.8 1149.5,768.2 1157.5,770.0 1165.5,768.6 1173.5,766.4 1181.5,761.5 1190.4,754.9 1197.5,751.9 1204.6,753.1 1213.5,754.0 1220.6,752.6 1229.5,749.5 1238.4,746.0 1245.5,747.2 1254.4,751.3 1268.6,759.3 1277.5,762.0 1285.5,759.3 1293.5,755.8 1302.4,752.6 1309.5,752.6 1318.4,753.6 1334.4,755.4 1343.3,759.3 1350.4,762.9 1357.5,765.0 1366.4,762.5 1373.5,760.2 1382.3,753.1 1389.5,748.3 1396.6,749.5" fill="none" stroke="#ff0000" stroke-width="1" shape-rendering="crispEdges"/><polyline points="525.2,806.4 539.8,809.1 557.5,813.0 566.4,808.7 575.3,810.0 589.5,814.1 596.6,812.6 605.5,814.4 612.6,813.5 621.5,814.4 628.6,812.6 637.5,809.1 653.5,805.5 662.4,805.5 669.5,807.7 678.4,807.7 685.5,809.4 693.5,809.1 701.5,807.7 710.4,808.7 717.5,808.7 742.4,808.7 749.5,809.4 756.6,806.4 765.5,804.6 774.4,807.7 781.5,805.5 790.3,805.5 799.2,807.7 813.5,808.5 818.0,807.3 844.7,806.4 853.5,803.7 860.7,803.7 869.5,806.4 877.5,802.9 885.5,808.5 892.6,804.6 901.5,806.4 910.4,806.4 917.5,807.7 930.0,807.7 942.4,808.7 956.6,806.4 965.5,808.7 974.4,804.6 988.6,802.3 997.5,803.7 1006.4,810.0 1013.5,811.7 1022.4,813.5 1031.3,812.6 1038.4,814.4 1047.3,811.2 1057.9,812.6 1061.5,813.5 1070.4,808.5 1077.5,808.2 1086.3,809.4 1100.6,806.8 1109.5,807.3 1114.0,807.7 1133.5,808.5 1165.5,807.3 1185.1,807.7 1197.5,808.5 1213.5,808.5 1220.6,806.4 1229.5,807.7 1245.5,808.5 1254.4,809.4 1261.5,807.3 1270.4,809.1 1277.5,811.7 1285.5,802.3 1293.5,804.1 1302.4,806.4 1309.5,803.7 1318.4,803.7 1325.5,806.4 1334.4,807.3 1343.3,809.4 1350.4,809.1 1357.5,808.5 1369.9,807.3 1382.3,808.5 1389.5,808.5 1396.6,809.6" fill="none" stroke="#ff0000" stroke-width="1" shape-rendering="crispEdges"/><polyline points="525.2,844.6 532.7,850.0 548.7,866.8 557.5,868.6 566.4,858.5 573.5,859.2 581.5,869.5 588.6,871.3 598.4,864.2 605.5,869.9 612.6,868.6 621.5,870.0 628.6,867.7 637.5,861.5 646.4,855.3 660.6,850.0 667.7,854.4 676.6,858.8 685.5,862.4 693.5,861.5 701.5,852.6 710.4,852.6 717.5,855.3 726.4,855.3 735.3,858.5 749.5,862.9 756.6,857.1 765.5,847.3 772.6,863.3 781.5,850.8 790.3,847.3 797.5,858.8 806.3,869.1 813.5,868.6 818.0,859.7 823.3,858.5 835.8,860.6 845.5,862.4 853.5,850.0 862.4,855.3 869.5,863.3 877.5,847.3 885.5,863.3 893.5,847.3 901.5,855.3 908.6,854.4 917.5,864.2 930.0,863.8 942.4,865.1 956.6,859.2 965.5,868.6 974.4,857.1 988.6,848.5 997.5,851.7 1006.4,868.6 1022.4,871.3 1029.5,868.6 1038.4,870.9 1047.3,866.8 1054.4,869.1 1061.5,869.1 1070.4,860.6 1077.5,861.5 1086.3,864.2 1100.6,858.5 1109.5,859.2 1114.0,857.4 1124.7,854.4 1133.5,851.4 1141.5,856.2 1149.5,853.5 1158.4,858.5 1165.5,855.3 1173.5,859.2 1181.5,857.4 1189.5,860.6 1197.5,865.1 1204.6,857.6 1213.5,857.6 1222.4,849.1 1229.5,847.3 1238.4,851.4 1245.5,850.3 1254.4,859.2 1261.5,851.4 1268.6,861.5 1277.5,867.4 1285.5,843.2 1293.5,849.6 1302.4,858.8 1309.5,850.0 1318.4,847.3 1325.5,863.3 1332.6,860.3 1343.3,865.1 1357.5,863.3 1369.9,861.5 1382.3,861.5 1389.5,863.3 1396.6,869.5" fill="none" stroke="#00e5ee" stroke-width="1" shape-rendering="crispEdges"/><g shape-rendering="crispEdges"><rect x="524.5" y="160.5" width="1106" height="484" fill="none" stroke="#ffff00" stroke-width="1"/><line x1="1630" y1="160.5" x2="1633" y2="160.5" stroke="#ffff00" stroke-width="1"/><line x1="1630" y1="644.5" x2="1633" y2="644.5" stroke="#ffff00" stroke-width="1"/><rect x="524.5" y="646.5" width="1106" height="24" fill="none" stroke="#ffff00" stroke-width="1"/><line x1="1630" y1="646.5" x2="1633" y2="646.5" stroke="#ffff00" stroke-width="1"/><line x1="1630" y1="670.5" x2="1633" y2="670.5" stroke="#ffff00" stroke-width="1"/><rect x="524.5" y="672.5" width="1106" height="51" fill="none" stroke="#ffff00" stroke-width="1"/><line x1="1630" y1="672.5" x2="1633" y2="672.5" stroke="#ffff00" stroke-width="1"/><line x1="1630" y1="723.5" x2="1633" y2="723.5" stroke="#ffff00" stroke-width="1"/><rect x="524.5" y="725.5" width="1106" height="51" fill="none" stroke="#ffff00" stroke-width="1"/><line x1="1630" y1="725.5" x2="1633" y2="725.5" stroke="#ffff00" stroke-width="1"/><line x1="1630" y1="776.5" x2="1633" y2="776.5" stroke="#ffff00" stroke-width="1"/><rect x="524.5" y="778.5" width="1106" height="46" fill="none" stroke="#ffff00" stroke-width="1"/><line x1="1630" y1="778.5" x2="1633" y2="778.5" stroke="#ffff00" stroke-width="1"/><line x1="1630" y1="824.5" x2="1633" y2="824.5" stroke="#ffff00" stroke-width="1"/><rect x="524.5" y="826.5" width="1106" height="46" fill="none" stroke="#ffff00" stroke-width="1"/><line x1="1630" y1="826.5" x2="1633" y2="826.5" stroke="#ffff00" stroke-width="1"/><line x1="1630" y1="872.5" x2="1633" y2="872.5" stroke="#ffff00" stroke-width="1"/><line x1="525.5" y1="872" x2="525.5" y2="876" stroke="#ffff00" stroke-width="1"/><line x1="589.5" y1="872" x2="589.5" y2="876" stroke="#ffff00" stroke-width="1"/><line x1="653.5" y1="872" x2="653.5" y2="876" stroke="#ffff00" stroke-width="1"/><line x1="717.5" y1="872" x2="717.5" y2="876" stroke="#ffff00" stroke-width="1"/><line x1="781.5" y1="872" x2="781.5" y2="876" stroke="#ffff00" stroke-width="1"/><line x1="845.5" y1="872" x2="845.5" y2="876" stroke="#ffff00" stroke-width="1"/><line x1="909.5" y1="872" x2="909.5" y2="876" stroke="#ffff00" stroke-width="1"/><line x1="973.5" y1="872" x2="973.5" y2="876" stroke="#ffff00" stroke-width="1"/><line x1="1037.5" y1="872" x2="1037.5" y2="876" stroke="#ffff00" stroke-width="1"/><line x1="1101.5" y1="872" x2="1101.5" y2="876" stroke="#ffff00" stroke-width="1"/><line x1="1165.5" y1="872" x2="1165.5" y2="876" stroke="#ffff00" stroke-width="1"/><line x1="1229.5" y1="872" x2="1229.5" y2="876" stroke="#ffff00" stroke-width="1"/><line x1="1293.5" y1="872" x2="1293.5" y2="876" stroke="#ffff00" stroke-width="1"/><line x1="1357.5" y1="872" x2="1357.5" y2="876" stroke="#ffff00" stroke-width="1"/><line x1="1421.5" y1="872" x2="1421.5" y2="876" stroke="#ffff00" stroke-width="1"/><line x1="1485.5" y1="872" x2="1485.5" y2="876" stroke="#ffff00" stroke-width="1"/><line x1="1549.5" y1="872" x2="1549.5" y2="876" stroke="#ffff00" stroke-width="1"/><line x1="1613.5" y1="872" x2="1613.5" y2="876" stroke="#ffff00" stroke-width="1"/><line x1="1630" y1="162.5" x2="1633" y2="162.5" stroke="#ffff00" stroke-width="1"/><line x1="1630" y1="194.5" x2="1633" y2="194.5" stroke="#ffff00" stroke-width="1"/><line x1="1630" y1="226.5" x2="1633" y2="226.5" stroke="#ffff00" stroke-width="1"/><line x1="1630" y1="258.5" x2="1633" y2="258.5" stroke="#ffff00" stroke-width="1"/><line x1="1630" y1="290.5" x2="1633" y2="290.5" stroke="#ffff00" stroke-width="1"/><line x1="1630" y1="322.5" x2="1633" y2="322.5" stroke="#ffff00" stroke-width="1"/><line x1="1630" y1="354.5" x2="1633" y2="354.5" stroke="#ffff00" stroke-width="1"/><line x1="1630" y1="386.5" x2="1633" y2="386.5" stroke="#ffff00" stroke-width="1"/><line x1="1630" y1="418.5" x2="1633" y2="418.5" stroke="#ffff00" stroke-width="1"/><line x1="1630" y1="450.5" x2="1633" y2="450.5" stroke="#ffff00" stroke-width="1"/><line x1="1630" y1="482.5" x2="1633" y2="482.5" stroke="#ffff00" stroke-width="1"/><line x1="1630" y1="514.5" x2="1633" y2="514.5" stroke="#ffff00" stroke-width="1"/><line x1="1630" y1="546.5" x2="1633" y2="546.5" stroke="#ffff00" stroke-width="1"/><line x1="1630" y1="578.5" x2="1633" y2="578.5" stroke="#ffff00" stroke-width="1"/><line x1="1630" y1="610.5" x2="1633" y2="610.5" stroke="#ffff00" stroke-width="1"/><line x1="1630" y1="642.5" x2="1633" y2="642.5" stroke="#ffff00" stroke-width="1"/></g><text transform="translate(1636,164.5) scale(0.93,1.08)" fill="#ffff00" stroke="#ffff00" stroke-width="0.3" font-size="9.5">1.32975</text><text transform="translate(1636,196.5) scale(0.93,1.08)" fill="#ffff00" stroke="#ffff00" stroke-width="0.3" font-size="9.5">1.32705</text><text transform="translate(1636,228.5) scale(0.93,1.08)" fill="#ffff00" stroke="#ffff00" stroke-width="0.3" font-size="9.5">1.32440</text><text transform="translate(1636,260.5) scale(0.93,1.08)" fill="#ffff00" stroke="#ffff00" stroke-width="0.3" font-size="9.5">1.32170</text><text transform="translate(1636,292.5) scale(0.93,1.08)" fill="#ffff00" stroke="#ffff00" stroke-width="0.3" font-size="9.5">1.31905</text><text transform="translate(1636,324.5) scale(0.93,1.08)" fill="#ffff00" stroke="#ffff00" stroke-width="0.3" font-size="9.5">1.31635</text><text transform="translate(1636,356.5) scale(0.93,1.08)" fill="#ffff00" stroke="#ffff00" stroke-width="0.3" font-size="9.5">1.31370</text><text transform="translate(1636,388.5) scale(0.93,1.08)" fill="#ffff00" stroke="#ffff00" stroke-width="0.3" font-size="9.5">1.31105</text><text transform="translate(1636,420.5) scale(0.93,1.08)" fill="#ffff00" stroke="#ffff00" stroke-width="0.3" font-size="9.5">1.30835</text><text transform="translate(1636,452.5) scale(0.93,1.08)" fill="#ffff00" stroke="#ffff00" stroke-width="0.3" font-size="9.5">1.30565</text><text transform="translate(1636,484.5) scale(0.93,1.08)" fill="#ffff00" stroke="#ffff00" stroke-width="0.3" font-size="9.5">1.30300</text><text transform="translate(1636,516.5) scale(0.93,1.08)" fill="#ffff00" stroke="#ffff00" stroke-width="0.3" font-size="9.5">1.30030</text><text transform="translate(1636,548.5) scale(0.93,1.08)" fill="#ffff00" stroke="#ffff00" stroke-width="0.3" font-size="9.5">1.29765</text><text transform="translate(1636,580.5) scale(0.93,1.08)" fill="#ffff00" stroke="#ffff00" stroke-width="0.3" font-size="9.5">1.29495</text><text transform="translate(1636,612.5) scale(0.93,1.08)" fill="#ffff00" stroke="#ffff00" stroke-width="0.3" font-size="9.5">1.29230</text><text transform="translate(1636,644.5) scale(0.93,1.08)" fill="#ffff00" stroke="#ffff00" stroke-width="0.3" font-size="9.5">1.28960</text><rect x="1633" y="225" width="37" height="11" fill="#00ff00"/><text transform="translate(1636,233.5) scale(0.93,1.08)" fill="#000" stroke="#000" stroke-width="0.3" font-size="9.5">1.32397</text><rect x="1633" y="382" width="37" height="11" fill="#00ff00"/><text transform="translate(1636,390.5) scale(0.93,1.08)" fill="#000" stroke="#000" stroke-width="0.3" font-size="9.5">1.31089</text><rect x="1633" y="466" width="37" height="11" fill="#ff00ff"/><text transform="translate(1636,474.5) scale(0.93,1.08)" fill="#000" stroke="#000" stroke-width="0.3" font-size="9.5">1.30381</text><rect x="1633" y="623" width="37" height="11" fill="#0000ff"/><text transform="translate(1636,631.5) scale(0.93,1.08)" fill="#000" stroke="#000" stroke-width="0.3" font-size="9.5">1.29073</text><line x1="1633" y1="622.5" x2="1670" y2="622.5" stroke="#ffff00" stroke-width="1"/><text transform="translate(1634,657) scale(0.93,1.08)" fill="#ffff00" stroke="#ffff00" stroke-width="0.3" font-size="9.5">2871</text><text transform="translate(1634,667) scale(0.93,1.08)" fill="#ffff00" stroke="#ffff00" stroke-width="0.3" font-size="9.5">0</text><text transform="translate(1634,683) scale(0.93,1.08)" fill="#ffff00" stroke="#ffff00" stroke-width="0.3" font-size="9.5">0</text><text transform="translate(1634,720) scale(0.93,1.08)" fill="#ffff00" stroke="#ffff00" stroke-width="0.3" font-size="9.5">-0.00399</text><text transform="translate(1634,736) scale(0.93,1.08)" fill="#ffff00" stroke="#ffff00" stroke-width="0.3" font-size="9.5">100</text><text transform="translate(1634,740) scale(0.93,1.08)" fill="#ffff00" stroke="#ffff00" stroke-width="0.3" font-size="9.5">80</text><text transform="translate(1634,769) scale(0.93,1.08)" fill="#ffff00" stroke="#ffff00" stroke-width="0.3" font-size="9.5">20</text><text transform="translate(1634,773) scale(0.93,1.08)" fill="#ffff00" stroke="#ffff00" stroke-width="0.3" font-size="9.5">0</text><text transform="translate(1634,789) scale(0.93,1.08)" fill="#ffff00" stroke="#ffff00" stroke-width="0.3" font-size="9.5">100</text><text transform="translate(1634,796) scale(0.93,1.08)" fill="#ffff00" stroke="#ffff00" stroke-width="0.3" font-size="9.5">70</text><text transform="translate(1634,813) scale(0.93,1.08)" fill="#ffff00" stroke="#ffff00" stroke-width="0.3" font-size="9.5">30</text><text transform="translate(1634,821) scale(0.93,1.08)" fill="#ffff00" stroke="#ffff00" stroke-width="0.3" font-size="9.5">0</text><text transform="translate(1634,836) scale(0.93,1.08)" fill="#ffff00" stroke="#ffff00" stroke-width="0.3" font-size="9.5">0</text><text transform="translate(1634,839) scale(0.93,1.08)" fill="#ffff00" stroke="#ffff00" stroke-width="0.3" font-size="9.5">-20</text><text transform="translate(1634,865) scale(0.93,1.08)" fill="#ffff00" stroke="#ffff00" stroke-width="0.3" font-size="9.5">-80</text><text transform="translate(1634,869) scale(0.93,1.08)" fill="#ffff00" stroke="#ffff00" stroke-width="0.3" font-size="9.5">-100</text><text transform="translate(528,172) scale(0.98,1.08)" fill="#ffff00" stroke="#ffff00" stroke-width="0.3" font-size="9.5">EURUSDmfu,M30&#160;&#160;1.29272 1.29283 1.29044 1.29080</text><text transform="translate(528,184) scale(0.98,1.08)" fill="#ffff00" stroke="#ffff00" stroke-width="0.3" font-size="9.5">High= 1.3169</text><text transform="translate(597,184) scale(0.98,1.08)" fill="#ffff00" stroke="#ffff00" stroke-width="0.3" font-size="9.5">Previous Days Range= 201.6</text><text transform="translate(528,196) scale(0.98,1.08)" fill="#ffff00" stroke="#ffff00" stroke-width="0.3" font-size="9.5">Low= 1.2967</text><text transform="translate(596,196) scale(0.98,1.08)" fill="#ffff00" stroke="#ffff00" stroke-width="0.3" font-size="9.5">Current Days Range= 115.2</text><text transform="translate(528,208) scale(0.98,1.08)" fill="#ffff00" stroke="#ffff00" stroke-width="0.3" font-size="9.5">Close= 1.2978</text><text transform="translate(528,660) scale(0.98,1.08)" fill="#ffff00" stroke="#ffff00" stroke-width="0.3" font-size="9.5">Volumes 690</text><text transform="translate(528,686) scale(0.98,1.08)" fill="#ffff00" stroke="#ffff00" stroke-width="0.3" font-size="9.5">MACD(12,26,9) -0.001964 -0.001774</text><text transform="translate(528,739) scale(0.98,1.08)" fill="#ffff00" stroke="#ffff00" stroke-width="0.3" font-size="9.5">Stoch(5,3,3) 36.3636 53.3376</text><text transform="translate(528,792) scale(0.98,1.08)" fill="#ffff00" stroke="#ffff00" stroke-width="0.3" font-size="9.5">RSI(14) 29.8373</text><text transform="translate(528,840) scale(0.98,1.08)" fill="#ffff00" stroke="#ffff00" stroke-width="0.3" font-size="9.5">%R(14) -96.6636</text><text transform="translate(525,884.5) scale(0.96,1.08)" fill="#ffff00" stroke="#ffff00" stroke-width="0.3" font-size="9.5">5 Jan 2011</text><text transform="translate(589,884.5) scale(0.96,1.08)" fill="#ffff00" stroke="#ffff00" stroke-width="0.3" font-size="9.5">5 Jan 13:00</text><text transform="translate(653,884.5) scale(0.96,1.08)" fill="#ffff00" stroke="#ffff00" stroke-width="0.3" font-size="9.5">5 Jan 17:00</text><text transform="translate(717,884.5) scale(0.96,1.08)" fill="#ffff00" stroke="#ffff00" stroke-width="0.3" font-size="9.5">5 Jan 21:00</text><text transform="translate(781,884.5) scale(0.96,1.08)" fill="#ffff00" stroke="#ffff00" stroke-width="0.3" font-size="9.5">6 Jan 01:00</text><text transform="translate(845,884.5) scale(0.96,1.08)" fill="#ffff00" stroke="#ffff00" stroke-width="0.3" font-size="9.5">6 Jan 05:00</text><text transform="translate(909,884.5) scale(0.96,1.08)" fill="#ffff00" stroke="#ffff00" stroke-width="0.3" font-size="9.5">6 Jan 09:00</text><text transform="translate(973,884.5) scale(0.96,1.08)" fill="#ffff00" stroke="#ffff00" stroke-width="0.3" font-size="9.5">6 Jan 13:00</text><text transform="translate(1037,884.5) scale(0.96,1.08)" fill="#ffff00" stroke="#ffff00" stroke-width="0.3" font-size="9.5">6 Jan 17:00</text><text transform="translate(1101,884.5) scale(0.96,1.08)" fill="#ffff00" stroke="#ffff00" stroke-width="0.3" font-size="9.5">7 Jan 02:00</text><text transform="translate(1165,884.5) scale(0.96,1.08)" fill="#ffff00" stroke="#ffff00" stroke-width="0.3" font-size="9.5">7 Jan 06:00</text><text transform="translate(1229,884.5) scale(0.96,1.08)" fill="#ffff00" stroke="#ffff00" stroke-width="0.3" font-size="9.5">7 Jan 10:00</text><text transform="translate(1293,884.5) scale(0.96,1.08)" fill="#ffff00" stroke="#ffff00" stroke-width="0.3" font-size="9.5">7 Jan 14:00</text><text transform="translate(1357,884.5) scale(0.96,1.08)" fill="#ffff00" stroke="#ffff00" stroke-width="0.3" font-size="9.5">7 Jan 18:00</text><rect x="1038" y="876" width="78" height="11" fill="#ff0000"/><text transform="translate(1041,884.5) scale(0.96,1.08)" fill="#000000" stroke="#000000" stroke-width="0.3" font-size="9.5">2011.01.07 00:30</text><rect x="1366" y="876" width="78" height="11" fill="#ff0000"/><text transform="translate(1369,884.5) scale(0.96,1.08)" fill="#000000" stroke="#000000" stroke-width="0.3" font-size="9.5">2011.01.07 21:00</text></svg><div class="a" style="left:4px;top:896px;width:1676px;height:103px;background:#e0dfe3"></div><div class="a" style="left:4px;top:896px;width:1676px;height:1px;background:#a0a0a0"></div><div class="a" style="left:4px;top:897px;width:1676px;height:1px;background:#fff"></div><div class="a" style="left:5px;top:902px;width:14px;height:94px;background:linear-gradient(#e6e7ef,#f3f3f8)"></div><svg class="a" style="left:7px;top:903px" width="8" height="7"><path d="M1 1L7 6M7 1L1 6" stroke="#000" stroke-width="1.9"/></svg><div class="t" style="left:-9.5px;top:968px;font-size:11px;color:#a8a8a8;transform:rotate(-90deg);transform-origin:center;letter-spacing:0.5px">Terminal</div><div class="a" style="left:19px;top:901px;width:1661px;height:75px;background:#fff;border-left:1px solid #9c9c9c;border-top:1px solid #9c9c9c"></div><div class="a" style="left:20px;top:902px;width:1660px;height:19px;background:linear-gradient(#fafafd,#f1f1f6);border-bottom:2px solid #c8c8d6"></div><div class="t" style="left:28px;top:907px;font-size:11px">Symbole</div><div class="t" style="left:128px;top:907px;font-size:11px">Condition</div><div class="t" style="right:1331px;top:907px;font-size:11px">Compteur</div><div class="t" style="right:1207px;top:907px;font-size:11px">Limite</div><div class="t" style="right:1083px;top:907px;font-size:11px">Temps d&#233;pass&#233;</div><div class="t" style="left:620px;top:907px;font-size:11px">Ev&#233;nement</div><div class="a" style="left:118px;top:905px;width:1px;height:14px;background:#c0c0cc"></div><div class="a" style="left:238px;top:905px;width:1px;height:14px;background:#c0c0cc"></div><div class="a" style="left:362px;top:905px;width:1px;height:14px;background:#c0c0cc"></div><div class="a" style="left:486px;top:905px;width:1px;height:14px;background:#c0c0cc"></div><div class="a" style="left:610px;top:905px;width:1px;height:14px;background:#c0c0cc"></div><div class="a" style="left:1678px;top:905px;width:1px;height:14px;background:#c0c0cc"></div><div class="a" style="left:20px;top:976px;width:1660px;height:1px;background:#000"></div><div class="a" style="left:22px;top:976px;width:54px;height:19px;background:#fff;border:1.5px solid #000;border-top:none"></div><div class="t" style="left:31px;top:979px;font-size:11px">Alertes</div><div class="t" style="left:85px;top:980px;font-size:11px;color:#6c6c6c">Messagerie</div><div class="t" style="left:159px;top:980px;font-size:11px;color:#6c6c6c">Experts</div><div class="t" style="left:216px;top:980px;font-size:11px;color:#6c6c6c">Journal</div><div class="a" style="left:150px;top:978px;width:1px;height:14px;background:#8c8c8c"></div><div class="a" style="left:207px;top:978px;width:1px;height:14px;background:#8c8c8c"></div><div class="a" style="left:262px;top:978px;width:1px;height:14px;background:#8c8c8c"></div><div class="a" style="left:4px;top:998px;width:1676px;height:1px;background:#fff"></div><div class="a" style="left:4px;top:999px;width:1676px;height:1px;background:#9c9c9c"></div><div class="a" style="left:4px;top:1000px;width:1676px;height:22px;background:#e0dfe3"></div><div class="t" style="left:5px;top:1007px;font-size:10.8px">Pour plus d'informations, appuyer F1</div><div class="a" style="left:860px;top:1004px;width:1px;height:16px;background:#a8a8b0"></div><div class="a" style="left:992px;top:1004px;width:1px;height:16px;background:#a8a8b0"></div><div class="a" style="left:1111px;top:1004px;width:1px;height:16px;background:#a8a8b0"></div><div class="a" style="left:1195px;top:1004px;width:1px;height:16px;background:#a8a8b0"></div><div class="a" style="left:1278px;top:1004px;width:1px;height:16px;background:#a8a8b0"></div><div class="a" style="left:1359px;top:1004px;width:1px;height:16px;background:#a8a8b0"></div><div class="a" style="left:1442px;top:1004px;width:1px;height:16px;background:#a8a8b0"></div><div class="a" style="left:1522px;top:1004px;width:1px;height:16px;background:#a8a8b0"></div><div class="t" style="left:865px;top:1007px;font-size:11px">Default</div><svg class="a" style="left:1527px;top:1004px" width="24" height="13"><rect x="0" y="1" width="2" height="11" fill="#8b0a0a"/><rect x="3" y="0" width="2" height="12" fill="#8b0a0a"/><rect x="6" y="1" width="2" height="11" fill="#8b0a0a"/><rect x="9" y="0" width="2" height="12" fill="#8b0a0a"/><rect x="12" y="1" width="2" height="11" fill="#8b0a0a"/><rect x="15" y="0" width="2" height="12" fill="#8b0a0a"/><rect x="18" y="1" width="2" height="11" fill="#8b0a0a"/><rect x="21" y="0" width="2" height="12" fill="#8b0a0a"/></svg><div class="t" style="left:1558px;top:1007px;font-size:10.6px">Compte invalide</div><svg class="a" style="left:1666px;top:1008px" width="14" height="14"><path d="M13 2L2 13M13 6L6 13M13 10L10 13" stroke="#a8a8b8" stroke-width="1.2"/></svg><div class="a" style="left:4px;top:1021px;width:1676px;height:1px;background:#6c6c8c"></div><div class="a" style="left:0px;top:1022px;width:162px;height:3px;background:#98d880;border-top:1px solid #107810;border-right:1px solid #107810;border-top-right-radius:3px"></div><div class="a" style="left:1490px;top:1022px;width:60px;height:1px;background:#6f6f8c"></div></div></body></html>
